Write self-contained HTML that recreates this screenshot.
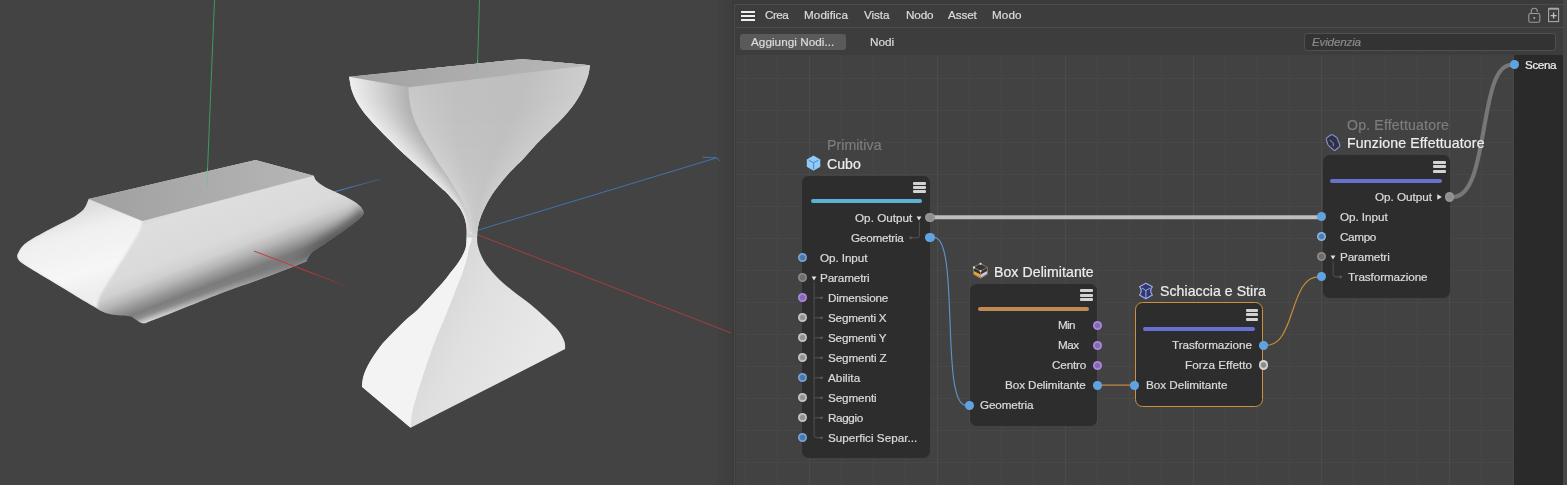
<!DOCTYPE html>
<html><head><meta charset="utf-8"><title>Node Editor</title><style>
html,body{margin:0;padding:0;background:#434343;}
body{width:1567px;height:485px;position:relative;overflow:hidden;font-family:"Liberation Sans",sans-serif;}
.t{position:absolute;white-space:nowrap;line-height:1;-webkit-text-stroke:0.22px currentColor;will-change:transform;}
.a{position:absolute;}
.node{position:absolute;background:#2d2d2d;border-radius:6.5px;box-sizing:border-box;}
.port{position:absolute;width:9.2px;height:9.2px;border-radius:50%;}
.bar{position:absolute;height:4.2px;border-radius:2.1px;}
.mi{position:absolute;width:12.4px;height:11.6px;}
.mi i{position:absolute;left:0;width:100%;height:3px;border-radius:1px;background:#d2d2d2;}
</style></head><body>
<div class="a" style="left:717px;top:0;width:16px;height:485px;background:linear-gradient(to right,#414141,#3e3e3e);"></div>
<svg class="a" style="left:0;top:0" width="736" height="485" viewBox="0 0 736 485">
<defs><filter id="b4" x="-20%" y="-20%" width="140%" height="140%"><feGaussianBlur stdDeviation="4"/></filter>
<filter id="b3" x="-20%" y="-20%" width="140%" height="140%"><feGaussianBlur stdDeviation="2.5"/></filter>
<filter id="b2" x="-20%" y="-20%" width="140%" height="140%"><feGaussianBlur stdDeviation="1.5"/></filter>
<filter id="b1" x="-20%" y="-20%" width="140%" height="140%"><feGaussianBlur stdDeviation="0.8"/></filter>
<linearGradient id="g1top" gradientUnits="userSpaceOnUse" x1="90" y1="200" x2="314" y2="176"><stop offset="0" stop-color="#a0a0a0"/><stop offset="1" stop-color="#b6b6b6"/></linearGradient>
<linearGradient id="g1front" gradientUnits="userSpaceOnUse" x1="190" y1="198.7" x2="226" y2="292"><stop offset="0" stop-color="#d6d6d6"/><stop offset="0.1" stop-color="#dedede"/><stop offset="0.5" stop-color="#dadada"/><stop offset="0.62" stop-color="#d0d0d0"/><stop offset="0.72" stop-color="#b6b6b6"/><stop offset="0.80" stop-color="#989898"/><stop offset="0.88" stop-color="#7e7e7e"/><stop offset="0.93" stop-color="#8e8e8e"/><stop offset="0.97" stop-color="#bcbcbc"/><stop offset="1" stop-color="#dadada"/></linearGradient>
<linearGradient id="g1lite" gradientUnits="userSpaceOnUse" x1="100" y1="0" x2="365" y2="0"><stop offset="0" stop-color="#fff" stop-opacity="0.16"/><stop offset="0.6" stop-color="#fff" stop-opacity="0"/></linearGradient>
<linearGradient id="g1left" gradientUnits="userSpaceOnUse" x1="60" y1="215" x2="85" y2="300"><stop offset="0" stop-color="#dedede"/><stop offset="0.25" stop-color="#f0f0f0"/><stop offset="0.7" stop-color="#f6f6f6"/><stop offset="1" stop-color="#ededed"/></linearGradient>
<linearGradient id="gblue1" gradientUnits="userSpaceOnUse" x1="335" y1="0" x2="380" y2="0"><stop offset="0" stop-color="#4a8ed2"/><stop offset="1" stop-color="#3a6ea6" stop-opacity="0.5"/></linearGradient>
<linearGradient id="gred1" gradientUnits="userSpaceOnUse" x1="254" y1="0" x2="347" y2="0"><stop offset="0" stop-color="#c83a3a"/><stop offset="0.6" stop-color="#c03838"/><stop offset="1" stop-color="#a03434" stop-opacity="0.25"/></linearGradient>
<linearGradient id="gband" gradientUnits="userSpaceOnUse" x1="150" y1="0" x2="320" y2="0"><stop offset="0" stop-color="#565656" stop-opacity="0"/><stop offset="1" stop-color="#565656" stop-opacity="1"/></linearGradient>
<linearGradient id="g2top" gradientUnits="userSpaceOnUse" x1="350" y1="77" x2="590" y2="65"><stop offset="0" stop-color="#a2a2a2"/><stop offset="1" stop-color="#b8b8b8"/></linearGradient>
<linearGradient id="g2lf" gradientUnits="userSpaceOnUse" x1="430" y1="300" x2="540" y2="350"><stop offset="0" stop-color="#d6d6d6"/><stop offset="0.4" stop-color="#e0e0e0"/><stop offset="1" stop-color="#e8e8e8"/></linearGradient><linearGradient id="f0"><stop offset="0" stop-color="#c8c8c8"/><stop offset="0.28" stop-color="#c0c0c0"/><stop offset="0.65" stop-color="#bfbfbf"/><stop offset="1" stop-color="#cecece"/></linearGradient><linearGradient id="l0"><stop offset="0" stop-color="#f0f0f0"/><stop offset="0.45" stop-color="#d4d4d4"/><stop offset="1" stop-color="#b0b0b0"/></linearGradient><linearGradient id="f1"><stop offset="0" stop-color="#c8c8c8"/><stop offset="0.28" stop-color="#c0c0c0"/><stop offset="0.65" stop-color="#bfbfbf"/><stop offset="1" stop-color="#cecece"/></linearGradient><linearGradient id="l1"><stop offset="0" stop-color="#f0f0f0"/><stop offset="0.45" stop-color="#d4d4d4"/><stop offset="1" stop-color="#b0b0b0"/></linearGradient><linearGradient id="f2"><stop offset="0" stop-color="#c8c8c8"/><stop offset="0.28" stop-color="#c0c0c0"/><stop offset="0.65" stop-color="#bfbfbf"/><stop offset="1" stop-color="#cecece"/></linearGradient><linearGradient id="l2"><stop offset="0" stop-color="#f0f0f0"/><stop offset="0.45" stop-color="#d4d4d4"/><stop offset="1" stop-color="#b0b0b0"/></linearGradient><linearGradient id="f3"><stop offset="0" stop-color="#c8c8c8"/><stop offset="0.28" stop-color="#c0c0c0"/><stop offset="0.65" stop-color="#bfbfbf"/><stop offset="1" stop-color="#cecece"/></linearGradient><linearGradient id="l3"><stop offset="0" stop-color="#f0f0f0"/><stop offset="0.45" stop-color="#d4d4d4"/><stop offset="1" stop-color="#b0b0b0"/></linearGradient><linearGradient id="f4"><stop offset="0" stop-color="#c8c8c8"/><stop offset="0.28" stop-color="#c0c0c0"/><stop offset="0.65" stop-color="#bfbfbf"/><stop offset="1" stop-color="#cecece"/></linearGradient><linearGradient id="l4"><stop offset="0" stop-color="#f0f0f0"/><stop offset="0.45" stop-color="#d4d4d4"/><stop offset="1" stop-color="#b0b0b0"/></linearGradient><linearGradient id="f5"><stop offset="0" stop-color="#c8c8c8"/><stop offset="0.28" stop-color="#c0c0c0"/><stop offset="0.65" stop-color="#bfbfbf"/><stop offset="1" stop-color="#cecece"/></linearGradient><linearGradient id="l5"><stop offset="0" stop-color="#f0f0f0"/><stop offset="0.45" stop-color="#d4d4d4"/><stop offset="1" stop-color="#b0b0b0"/></linearGradient><linearGradient id="f6"><stop offset="0" stop-color="#c8c8c8"/><stop offset="0.28" stop-color="#c0c0c0"/><stop offset="0.65" stop-color="#bfbfbf"/><stop offset="1" stop-color="#cecece"/></linearGradient><linearGradient id="l6"><stop offset="0" stop-color="#f0f0f0"/><stop offset="0.45" stop-color="#d4d4d4"/><stop offset="1" stop-color="#b0b0b0"/></linearGradient><linearGradient id="f7"><stop offset="0" stop-color="#c8c8c8"/><stop offset="0.28" stop-color="#c0c0c0"/><stop offset="0.65" stop-color="#bfbfbf"/><stop offset="1" stop-color="#cecece"/></linearGradient><linearGradient id="l7"><stop offset="0" stop-color="#f0f0f0"/><stop offset="0.45" stop-color="#d4d4d4"/><stop offset="1" stop-color="#b0b0b0"/></linearGradient><linearGradient id="f8"><stop offset="0" stop-color="#c8c8c8"/><stop offset="0.28" stop-color="#c0c0c0"/><stop offset="0.65" stop-color="#bfbfbf"/><stop offset="1" stop-color="#cecece"/></linearGradient><linearGradient id="l8"><stop offset="0" stop-color="#f0f0f0"/><stop offset="0.45" stop-color="#d4d4d4"/><stop offset="1" stop-color="#b0b0b0"/></linearGradient><linearGradient id="f9"><stop offset="0" stop-color="#c8c8c8"/><stop offset="0.28" stop-color="#c0c0c0"/><stop offset="0.65" stop-color="#bfbfbf"/><stop offset="1" stop-color="#cecece"/></linearGradient><linearGradient id="l9"><stop offset="0" stop-color="#f0f0f0"/><stop offset="0.45" stop-color="#d4d4d4"/><stop offset="1" stop-color="#b0b0b0"/></linearGradient><linearGradient id="f10"><stop offset="0" stop-color="#c8c8c8"/><stop offset="0.28" stop-color="#c0c0c0"/><stop offset="0.65" stop-color="#bfbfbf"/><stop offset="1" stop-color="#cecece"/></linearGradient><linearGradient id="l10"><stop offset="0" stop-color="#f0f0f0"/><stop offset="0.45" stop-color="#d4d4d4"/><stop offset="1" stop-color="#b0b0b0"/></linearGradient><linearGradient id="f11"><stop offset="0" stop-color="#c8c8c8"/><stop offset="0.28" stop-color="#c0c0c0"/><stop offset="0.65" stop-color="#bfbfbf"/><stop offset="1" stop-color="#cecece"/></linearGradient><linearGradient id="l11"><stop offset="0" stop-color="#f0f0f0"/><stop offset="0.45" stop-color="#d4d4d4"/><stop offset="1" stop-color="#b0b0b0"/></linearGradient><linearGradient id="f12"><stop offset="0" stop-color="#c8c8c8"/><stop offset="0.28" stop-color="#c0c0c0"/><stop offset="0.65" stop-color="#bfbfbf"/><stop offset="1" stop-color="#cecece"/></linearGradient><linearGradient id="l12"><stop offset="0" stop-color="#f0f0f0"/><stop offset="0.45" stop-color="#d4d4d4"/><stop offset="1" stop-color="#b0b0b0"/></linearGradient><linearGradient id="f13"><stop offset="0" stop-color="#c8c8c8"/><stop offset="0.28" stop-color="#c0c0c0"/><stop offset="0.65" stop-color="#bfbfbf"/><stop offset="1" stop-color="#cecece"/></linearGradient><linearGradient id="l13"><stop offset="0" stop-color="#f0f0f0"/><stop offset="0.45" stop-color="#d4d4d4"/><stop offset="1" stop-color="#b0b0b0"/></linearGradient><linearGradient id="f14"><stop offset="0" stop-color="#c8c8c8"/><stop offset="0.28" stop-color="#c0c0c0"/><stop offset="0.65" stop-color="#bfbfbf"/><stop offset="1" stop-color="#cecece"/></linearGradient><linearGradient id="l14"><stop offset="0" stop-color="#f0f0f0"/><stop offset="0.45" stop-color="#d4d4d4"/><stop offset="1" stop-color="#b0b0b0"/></linearGradient><linearGradient id="f15"><stop offset="0" stop-color="#c8c8c8"/><stop offset="0.28" stop-color="#c0c0c0"/><stop offset="0.65" stop-color="#bfbfbf"/><stop offset="1" stop-color="#cecece"/></linearGradient><linearGradient id="l15"><stop offset="0" stop-color="#f0f0f0"/><stop offset="0.45" stop-color="#d4d4d4"/><stop offset="1" stop-color="#b0b0b0"/></linearGradient><linearGradient id="f16"><stop offset="0" stop-color="#c8c8c8"/><stop offset="0.28" stop-color="#c0c0c0"/><stop offset="0.65" stop-color="#bfbfbf"/><stop offset="1" stop-color="#cecece"/></linearGradient><linearGradient id="l16"><stop offset="0" stop-color="#f0f0f0"/><stop offset="0.45" stop-color="#d4d4d4"/><stop offset="1" stop-color="#b0b0b0"/></linearGradient><linearGradient id="f17"><stop offset="0" stop-color="#c8c8c8"/><stop offset="0.28" stop-color="#c0c0c0"/><stop offset="0.65" stop-color="#bfbfbf"/><stop offset="1" stop-color="#cecece"/></linearGradient><linearGradient id="l17"><stop offset="0" stop-color="#f0f0f0"/><stop offset="0.45" stop-color="#d4d4d4"/><stop offset="1" stop-color="#b0b0b0"/></linearGradient><linearGradient id="f18"><stop offset="0" stop-color="#c8c8c8"/><stop offset="0.28" stop-color="#c0c0c0"/><stop offset="0.65" stop-color="#bfbfbf"/><stop offset="1" stop-color="#cecece"/></linearGradient><linearGradient id="l18"><stop offset="0" stop-color="#f0f0f0"/><stop offset="0.45" stop-color="#d4d4d4"/><stop offset="1" stop-color="#b0b0b0"/></linearGradient><linearGradient id="f19"><stop offset="0" stop-color="#c8c8c8"/><stop offset="0.28" stop-color="#c0c0c0"/><stop offset="0.65" stop-color="#bfbfbf"/><stop offset="1" stop-color="#cecece"/></linearGradient><linearGradient id="l19"><stop offset="0" stop-color="#f0f0f0"/><stop offset="0.45" stop-color="#d4d4d4"/><stop offset="1" stop-color="#b0b0b0"/></linearGradient><linearGradient id="f20"><stop offset="0" stop-color="#c9c9c9"/><stop offset="0.28" stop-color="#c0c0c0"/><stop offset="0.65" stop-color="#bfbfbf"/><stop offset="1" stop-color="#cecece"/></linearGradient><linearGradient id="l20"><stop offset="0" stop-color="#f0f0f0"/><stop offset="0.45" stop-color="#d4d4d4"/><stop offset="1" stop-color="#b0b0b0"/></linearGradient><linearGradient id="f21"><stop offset="0" stop-color="#c9c9c9"/><stop offset="0.28" stop-color="#c0c0c0"/><stop offset="0.65" stop-color="#bfbfbf"/><stop offset="1" stop-color="#cecece"/></linearGradient><linearGradient id="l21"><stop offset="0" stop-color="#f0f0f0"/><stop offset="0.45" stop-color="#d4d4d4"/><stop offset="1" stop-color="#b0b0b0"/></linearGradient><linearGradient id="f22"><stop offset="0" stop-color="#c9c9c9"/><stop offset="0.28" stop-color="#c0c0c0"/><stop offset="0.65" stop-color="#bfbfbf"/><stop offset="1" stop-color="#cecece"/></linearGradient><linearGradient id="l22"><stop offset="0" stop-color="#f0f0f0"/><stop offset="0.45" stop-color="#d4d4d4"/><stop offset="1" stop-color="#b0b0b0"/></linearGradient><linearGradient id="f23"><stop offset="0" stop-color="#c9c9c9"/><stop offset="0.28" stop-color="#c0c0c0"/><stop offset="0.65" stop-color="#bfbfbf"/><stop offset="1" stop-color="#cecece"/></linearGradient><linearGradient id="l23"><stop offset="0" stop-color="#efefef"/><stop offset="0.45" stop-color="#d4d4d4"/><stop offset="1" stop-color="#b0b0b0"/></linearGradient><linearGradient id="f24"><stop offset="0" stop-color="#cacaca"/><stop offset="0.28" stop-color="#c0c0c0"/><stop offset="0.65" stop-color="#bfbfbf"/><stop offset="1" stop-color="#cecece"/></linearGradient><linearGradient id="l24"><stop offset="0" stop-color="#efefef"/><stop offset="0.45" stop-color="#d4d4d4"/><stop offset="1" stop-color="#b0b0b0"/></linearGradient><linearGradient id="f25"><stop offset="0" stop-color="#cacaca"/><stop offset="0.28" stop-color="#c0c0c0"/><stop offset="0.65" stop-color="#bfbfbf"/><stop offset="1" stop-color="#cecece"/></linearGradient><linearGradient id="l25"><stop offset="0" stop-color="#efefef"/><stop offset="0.45" stop-color="#d4d4d4"/><stop offset="1" stop-color="#b0b0b0"/></linearGradient><linearGradient id="f26"><stop offset="0" stop-color="#cacaca"/><stop offset="0.28" stop-color="#c0c0c0"/><stop offset="0.65" stop-color="#bfbfbf"/><stop offset="1" stop-color="#cecece"/></linearGradient><linearGradient id="l26"><stop offset="0" stop-color="#efefef"/><stop offset="0.45" stop-color="#d4d4d4"/><stop offset="1" stop-color="#b0b0b0"/></linearGradient><linearGradient id="f27"><stop offset="0" stop-color="#cacaca"/><stop offset="0.28" stop-color="#c0c0c0"/><stop offset="0.65" stop-color="#bfbfbf"/><stop offset="1" stop-color="#cecece"/></linearGradient><linearGradient id="l27"><stop offset="0" stop-color="#efefef"/><stop offset="0.45" stop-color="#d4d4d4"/><stop offset="1" stop-color="#b0b0b0"/></linearGradient><linearGradient id="f28"><stop offset="0" stop-color="#cacaca"/><stop offset="0.28" stop-color="#c0c0c0"/><stop offset="0.65" stop-color="#bfbfbf"/><stop offset="1" stop-color="#cecece"/></linearGradient><linearGradient id="l28"><stop offset="0" stop-color="#efefef"/><stop offset="0.45" stop-color="#d4d4d4"/><stop offset="1" stop-color="#b0b0b0"/></linearGradient><linearGradient id="f29"><stop offset="0" stop-color="#cbcbcb"/><stop offset="0.28" stop-color="#c0c0c0"/><stop offset="0.65" stop-color="#bfbfbf"/><stop offset="1" stop-color="#cecece"/></linearGradient><linearGradient id="l29"><stop offset="0" stop-color="#efefef"/><stop offset="0.45" stop-color="#d4d4d4"/><stop offset="1" stop-color="#b0b0b0"/></linearGradient><linearGradient id="f30"><stop offset="0" stop-color="#cbcbcb"/><stop offset="0.28" stop-color="#c1c1c1"/><stop offset="0.65" stop-color="#bfbfbf"/><stop offset="1" stop-color="#cecece"/></linearGradient><linearGradient id="l30"><stop offset="0" stop-color="#efefef"/><stop offset="0.45" stop-color="#d4d4d4"/><stop offset="1" stop-color="#b0b0b0"/></linearGradient><linearGradient id="f31"><stop offset="0" stop-color="#cbcbcb"/><stop offset="0.28" stop-color="#c1c1c1"/><stop offset="0.65" stop-color="#bfbfbf"/><stop offset="1" stop-color="#cecece"/></linearGradient><linearGradient id="l31"><stop offset="0" stop-color="#efefef"/><stop offset="0.45" stop-color="#d4d4d4"/><stop offset="1" stop-color="#b0b0b0"/></linearGradient><linearGradient id="f32"><stop offset="0" stop-color="#cbcbcb"/><stop offset="0.28" stop-color="#c1c1c1"/><stop offset="0.65" stop-color="#bfbfbf"/><stop offset="1" stop-color="#cecece"/></linearGradient><linearGradient id="l32"><stop offset="0" stop-color="#eeeeee"/><stop offset="0.45" stop-color="#d4d4d4"/><stop offset="1" stop-color="#b0b0b0"/></linearGradient><linearGradient id="f33"><stop offset="0" stop-color="#cbcbcb"/><stop offset="0.28" stop-color="#c1c1c1"/><stop offset="0.65" stop-color="#bfbfbf"/><stop offset="1" stop-color="#cecece"/></linearGradient><linearGradient id="l33"><stop offset="0" stop-color="#eeeeee"/><stop offset="0.45" stop-color="#d5d5d5"/><stop offset="1" stop-color="#b0b0b0"/></linearGradient><linearGradient id="f34"><stop offset="0" stop-color="#cbcbcb"/><stop offset="0.28" stop-color="#c1c1c1"/><stop offset="0.65" stop-color="#bfbfbf"/><stop offset="1" stop-color="#cecece"/></linearGradient><linearGradient id="l34"><stop offset="0" stop-color="#eeeeee"/><stop offset="0.45" stop-color="#d5d5d5"/><stop offset="1" stop-color="#b0b0b0"/></linearGradient><linearGradient id="f35"><stop offset="0" stop-color="#cccccc"/><stop offset="0.28" stop-color="#c1c1c1"/><stop offset="0.65" stop-color="#bfbfbf"/><stop offset="1" stop-color="#cecece"/></linearGradient><linearGradient id="l35"><stop offset="0" stop-color="#eeeeee"/><stop offset="0.45" stop-color="#d5d5d5"/><stop offset="1" stop-color="#b0b0b0"/></linearGradient><linearGradient id="f36"><stop offset="0" stop-color="#cccccc"/><stop offset="0.28" stop-color="#c1c1c1"/><stop offset="0.65" stop-color="#bfbfbf"/><stop offset="1" stop-color="#cecece"/></linearGradient><linearGradient id="l36"><stop offset="0" stop-color="#eeeeee"/><stop offset="0.45" stop-color="#d5d5d5"/><stop offset="1" stop-color="#b0b0b0"/></linearGradient><linearGradient id="f37"><stop offset="0" stop-color="#cccccc"/><stop offset="0.28" stop-color="#c1c1c1"/><stop offset="0.65" stop-color="#bfbfbf"/><stop offset="1" stop-color="#cecece"/></linearGradient><linearGradient id="l37"><stop offset="0" stop-color="#eeeeee"/><stop offset="0.45" stop-color="#d5d5d5"/><stop offset="1" stop-color="#b1b1b1"/></linearGradient><linearGradient id="f38"><stop offset="0" stop-color="#cccccc"/><stop offset="0.28" stop-color="#c1c1c1"/><stop offset="0.65" stop-color="#bfbfbf"/><stop offset="1" stop-color="#cecece"/></linearGradient><linearGradient id="l38"><stop offset="0" stop-color="#eeeeee"/><stop offset="0.45" stop-color="#d5d5d5"/><stop offset="1" stop-color="#b1b1b1"/></linearGradient><linearGradient id="f39"><stop offset="0" stop-color="#cccccc"/><stop offset="0.28" stop-color="#c1c1c1"/><stop offset="0.65" stop-color="#bfbfbf"/><stop offset="1" stop-color="#cecece"/></linearGradient><linearGradient id="l39"><stop offset="0" stop-color="#eeeeee"/><stop offset="0.45" stop-color="#d5d5d5"/><stop offset="1" stop-color="#b1b1b1"/></linearGradient><linearGradient id="f40"><stop offset="0" stop-color="#cccccc"/><stop offset="0.28" stop-color="#c1c1c1"/><stop offset="0.65" stop-color="#bfbfbf"/><stop offset="1" stop-color="#cecece"/></linearGradient><linearGradient id="l40"><stop offset="0" stop-color="#eeeeee"/><stop offset="0.45" stop-color="#d5d5d5"/><stop offset="1" stop-color="#b1b1b1"/></linearGradient><linearGradient id="f41"><stop offset="0" stop-color="#cdcdcd"/><stop offset="0.28" stop-color="#c1c1c1"/><stop offset="0.65" stop-color="#bfbfbf"/><stop offset="1" stop-color="#cecece"/></linearGradient><linearGradient id="l41"><stop offset="0" stop-color="#eeeeee"/><stop offset="0.45" stop-color="#d5d5d5"/><stop offset="1" stop-color="#b1b1b1"/></linearGradient><linearGradient id="f42"><stop offset="0" stop-color="#cdcdcd"/><stop offset="0.28" stop-color="#c2c2c2"/><stop offset="0.65" stop-color="#c0c0c0"/><stop offset="1" stop-color="#cdcdcd"/></linearGradient><linearGradient id="l42"><stop offset="0" stop-color="#ededed"/><stop offset="0.45" stop-color="#d5d5d5"/><stop offset="1" stop-color="#b1b1b1"/></linearGradient><linearGradient id="f43"><stop offset="0" stop-color="#cdcdcd"/><stop offset="0.28" stop-color="#c2c2c2"/><stop offset="0.65" stop-color="#c0c0c0"/><stop offset="1" stop-color="#cdcdcd"/></linearGradient><linearGradient id="l43"><stop offset="0" stop-color="#ededed"/><stop offset="0.45" stop-color="#d5d5d5"/><stop offset="1" stop-color="#b1b1b1"/></linearGradient><linearGradient id="f44"><stop offset="0" stop-color="#cdcdcd"/><stop offset="0.28" stop-color="#c2c2c2"/><stop offset="0.65" stop-color="#c0c0c0"/><stop offset="1" stop-color="#cdcdcd"/></linearGradient><linearGradient id="l44"><stop offset="0" stop-color="#ededed"/><stop offset="0.45" stop-color="#d5d5d5"/><stop offset="1" stop-color="#b1b1b1"/></linearGradient><linearGradient id="f45"><stop offset="0" stop-color="#cdcdcd"/><stop offset="0.28" stop-color="#c2c2c2"/><stop offset="0.65" stop-color="#c0c0c0"/><stop offset="1" stop-color="#cdcdcd"/></linearGradient><linearGradient id="l45"><stop offset="0" stop-color="#ededed"/><stop offset="0.45" stop-color="#d5d5d5"/><stop offset="1" stop-color="#b1b1b1"/></linearGradient><linearGradient id="f46"><stop offset="0" stop-color="#cdcdcd"/><stop offset="0.28" stop-color="#c2c2c2"/><stop offset="0.65" stop-color="#c0c0c0"/><stop offset="1" stop-color="#cdcdcd"/></linearGradient><linearGradient id="l46"><stop offset="0" stop-color="#ededed"/><stop offset="0.45" stop-color="#d5d5d5"/><stop offset="1" stop-color="#b1b1b1"/></linearGradient><linearGradient id="f47"><stop offset="0" stop-color="#cdcdcd"/><stop offset="0.28" stop-color="#c2c2c2"/><stop offset="0.65" stop-color="#c0c0c0"/><stop offset="1" stop-color="#cdcdcd"/></linearGradient><linearGradient id="l47"><stop offset="0" stop-color="#ededed"/><stop offset="0.45" stop-color="#d5d5d5"/><stop offset="1" stop-color="#b1b1b1"/></linearGradient><linearGradient id="f48"><stop offset="0" stop-color="#cecece"/><stop offset="0.28" stop-color="#c2c2c2"/><stop offset="0.65" stop-color="#c0c0c0"/><stop offset="1" stop-color="#cdcdcd"/></linearGradient><linearGradient id="l48"><stop offset="0" stop-color="#ededed"/><stop offset="0.45" stop-color="#d5d5d5"/><stop offset="1" stop-color="#b2b2b2"/></linearGradient><linearGradient id="f49"><stop offset="0" stop-color="#cecece"/><stop offset="0.28" stop-color="#c2c2c2"/><stop offset="0.65" stop-color="#c0c0c0"/><stop offset="1" stop-color="#cdcdcd"/></linearGradient><linearGradient id="l49"><stop offset="0" stop-color="#ededed"/><stop offset="0.45" stop-color="#d5d5d5"/><stop offset="1" stop-color="#b2b2b2"/></linearGradient><linearGradient id="f50"><stop offset="0" stop-color="#cecece"/><stop offset="0.28" stop-color="#c2c2c2"/><stop offset="0.65" stop-color="#c0c0c0"/><stop offset="1" stop-color="#cdcdcd"/></linearGradient><linearGradient id="l50"><stop offset="0" stop-color="#ededed"/><stop offset="0.45" stop-color="#d6d6d6"/><stop offset="1" stop-color="#b2b2b2"/></linearGradient><linearGradient id="f51"><stop offset="0" stop-color="#cecece"/><stop offset="0.28" stop-color="#c3c3c3"/><stop offset="0.65" stop-color="#c0c0c0"/><stop offset="1" stop-color="#cdcdcd"/></linearGradient><linearGradient id="l51"><stop offset="0" stop-color="#ededed"/><stop offset="0.45" stop-color="#d6d6d6"/><stop offset="1" stop-color="#b2b2b2"/></linearGradient><linearGradient id="f52"><stop offset="0" stop-color="#cecece"/><stop offset="0.28" stop-color="#c3c3c3"/><stop offset="0.65" stop-color="#c0c0c0"/><stop offset="1" stop-color="#cdcdcd"/></linearGradient><linearGradient id="l52"><stop offset="0" stop-color="#ececec"/><stop offset="0.45" stop-color="#d6d6d6"/><stop offset="1" stop-color="#b2b2b2"/></linearGradient><linearGradient id="f53"><stop offset="0" stop-color="#cecece"/><stop offset="0.28" stop-color="#c3c3c3"/><stop offset="0.65" stop-color="#c0c0c0"/><stop offset="1" stop-color="#cdcdcd"/></linearGradient><linearGradient id="l53"><stop offset="0" stop-color="#ececec"/><stop offset="0.45" stop-color="#d6d6d6"/><stop offset="1" stop-color="#b2b2b2"/></linearGradient><linearGradient id="f54"><stop offset="0" stop-color="#cecece"/><stop offset="0.28" stop-color="#c3c3c3"/><stop offset="0.65" stop-color="#c0c0c0"/><stop offset="1" stop-color="#cdcdcd"/></linearGradient><linearGradient id="l54"><stop offset="0" stop-color="#ececec"/><stop offset="0.45" stop-color="#d6d6d6"/><stop offset="1" stop-color="#b2b2b2"/></linearGradient><linearGradient id="f55"><stop offset="0" stop-color="#cfcfcf"/><stop offset="0.28" stop-color="#c3c3c3"/><stop offset="0.65" stop-color="#c0c0c0"/><stop offset="1" stop-color="#cdcdcd"/></linearGradient><linearGradient id="l55"><stop offset="0" stop-color="#ececec"/><stop offset="0.45" stop-color="#d6d6d6"/><stop offset="1" stop-color="#b3b3b3"/></linearGradient><linearGradient id="f56"><stop offset="0" stop-color="#cfcfcf"/><stop offset="0.28" stop-color="#c3c3c3"/><stop offset="0.65" stop-color="#c0c0c0"/><stop offset="1" stop-color="#cdcdcd"/></linearGradient><linearGradient id="l56"><stop offset="0" stop-color="#ececec"/><stop offset="0.45" stop-color="#d6d6d6"/><stop offset="1" stop-color="#b3b3b3"/></linearGradient><linearGradient id="f57"><stop offset="0" stop-color="#cfcfcf"/><stop offset="0.28" stop-color="#c3c3c3"/><stop offset="0.65" stop-color="#c1c1c1"/><stop offset="1" stop-color="#cdcdcd"/></linearGradient><linearGradient id="l57"><stop offset="0" stop-color="#ececec"/><stop offset="0.45" stop-color="#d6d6d6"/><stop offset="1" stop-color="#b3b3b3"/></linearGradient><linearGradient id="f58"><stop offset="0" stop-color="#cfcfcf"/><stop offset="0.28" stop-color="#c3c3c3"/><stop offset="0.65" stop-color="#c1c1c1"/><stop offset="1" stop-color="#cdcdcd"/></linearGradient><linearGradient id="l58"><stop offset="0" stop-color="#ececec"/><stop offset="0.45" stop-color="#d6d6d6"/><stop offset="1" stop-color="#b3b3b3"/></linearGradient><linearGradient id="f59"><stop offset="0" stop-color="#cfcfcf"/><stop offset="0.28" stop-color="#c4c4c4"/><stop offset="0.65" stop-color="#c1c1c1"/><stop offset="1" stop-color="#cdcdcd"/></linearGradient><linearGradient id="l59"><stop offset="0" stop-color="#ececec"/><stop offset="0.45" stop-color="#d6d6d6"/><stop offset="1" stop-color="#b3b3b3"/></linearGradient><linearGradient id="f60"><stop offset="0" stop-color="#cfcfcf"/><stop offset="0.28" stop-color="#c4c4c4"/><stop offset="0.65" stop-color="#c1c1c1"/><stop offset="1" stop-color="#cdcdcd"/></linearGradient><linearGradient id="l60"><stop offset="0" stop-color="#ececec"/><stop offset="0.45" stop-color="#d6d6d6"/><stop offset="1" stop-color="#b4b4b4"/></linearGradient><linearGradient id="f61"><stop offset="0" stop-color="#cfcfcf"/><stop offset="0.28" stop-color="#c4c4c4"/><stop offset="0.65" stop-color="#c1c1c1"/><stop offset="1" stop-color="#cdcdcd"/></linearGradient><linearGradient id="l61"><stop offset="0" stop-color="#ececec"/><stop offset="0.45" stop-color="#d6d6d6"/><stop offset="1" stop-color="#b4b4b4"/></linearGradient><linearGradient id="f62"><stop offset="0" stop-color="#d0d0d0"/><stop offset="0.28" stop-color="#c4c4c4"/><stop offset="0.65" stop-color="#c1c1c1"/><stop offset="1" stop-color="#cdcdcd"/></linearGradient><linearGradient id="l62"><stop offset="0" stop-color="#ebebeb"/><stop offset="0.45" stop-color="#d6d6d6"/><stop offset="1" stop-color="#b4b4b4"/></linearGradient><linearGradient id="f63"><stop offset="0" stop-color="#d0d0d0"/><stop offset="0.28" stop-color="#c4c4c4"/><stop offset="0.65" stop-color="#c1c1c1"/><stop offset="1" stop-color="#cdcdcd"/></linearGradient><linearGradient id="l63"><stop offset="0" stop-color="#ebebeb"/><stop offset="0.45" stop-color="#d7d7d7"/><stop offset="1" stop-color="#b4b4b4"/></linearGradient><linearGradient id="f64"><stop offset="0" stop-color="#d0d0d0"/><stop offset="0.28" stop-color="#c4c4c4"/><stop offset="0.65" stop-color="#c1c1c1"/><stop offset="1" stop-color="#cdcdcd"/></linearGradient><linearGradient id="l64"><stop offset="0" stop-color="#ebebeb"/><stop offset="0.45" stop-color="#d7d7d7"/><stop offset="1" stop-color="#b4b4b4"/></linearGradient><linearGradient id="f65"><stop offset="0" stop-color="#d0d0d0"/><stop offset="0.28" stop-color="#c4c4c4"/><stop offset="0.65" stop-color="#c1c1c1"/><stop offset="1" stop-color="#cdcdcd"/></linearGradient><linearGradient id="l65"><stop offset="0" stop-color="#ebebeb"/><stop offset="0.45" stop-color="#d7d7d7"/><stop offset="1" stop-color="#b5b5b5"/></linearGradient><linearGradient id="f66"><stop offset="0" stop-color="#d0d0d0"/><stop offset="0.28" stop-color="#c5c5c5"/><stop offset="0.65" stop-color="#c1c1c1"/><stop offset="1" stop-color="#cdcdcd"/></linearGradient><linearGradient id="l66"><stop offset="0" stop-color="#ebebeb"/><stop offset="0.45" stop-color="#d7d7d7"/><stop offset="1" stop-color="#b5b5b5"/></linearGradient><linearGradient id="f67"><stop offset="0" stop-color="#d0d0d0"/><stop offset="0.28" stop-color="#c5c5c5"/><stop offset="0.65" stop-color="#c2c2c2"/><stop offset="1" stop-color="#cdcdcd"/></linearGradient><linearGradient id="l67"><stop offset="0" stop-color="#ebebeb"/><stop offset="0.45" stop-color="#d7d7d7"/><stop offset="1" stop-color="#b5b5b5"/></linearGradient><linearGradient id="f68"><stop offset="0" stop-color="#d0d0d0"/><stop offset="0.28" stop-color="#c5c5c5"/><stop offset="0.65" stop-color="#c2c2c2"/><stop offset="1" stop-color="#cdcdcd"/></linearGradient><linearGradient id="l68"><stop offset="0" stop-color="#ebebeb"/><stop offset="0.45" stop-color="#d7d7d7"/><stop offset="1" stop-color="#b6b6b6"/></linearGradient><linearGradient id="f69"><stop offset="0" stop-color="#d0d0d0"/><stop offset="0.28" stop-color="#c5c5c5"/><stop offset="0.65" stop-color="#c2c2c2"/><stop offset="1" stop-color="#cdcdcd"/></linearGradient><linearGradient id="l69"><stop offset="0" stop-color="#ebebeb"/><stop offset="0.45" stop-color="#d7d7d7"/><stop offset="1" stop-color="#b6b6b6"/></linearGradient><linearGradient id="f70"><stop offset="0" stop-color="#d1d1d1"/><stop offset="0.28" stop-color="#c5c5c5"/><stop offset="0.65" stop-color="#c2c2c2"/><stop offset="1" stop-color="#cdcdcd"/></linearGradient><linearGradient id="l70"><stop offset="0" stop-color="#ebebeb"/><stop offset="0.45" stop-color="#d7d7d7"/><stop offset="1" stop-color="#b6b6b6"/></linearGradient><linearGradient id="f71"><stop offset="0" stop-color="#d1d1d1"/><stop offset="0.28" stop-color="#c5c5c5"/><stop offset="0.65" stop-color="#c2c2c2"/><stop offset="1" stop-color="#cdcdcd"/></linearGradient><linearGradient id="l71"><stop offset="0" stop-color="#eaeaea"/><stop offset="0.45" stop-color="#d7d7d7"/><stop offset="1" stop-color="#b6b6b6"/></linearGradient><linearGradient id="f72"><stop offset="0" stop-color="#d1d1d1"/><stop offset="0.28" stop-color="#c6c6c6"/><stop offset="0.65" stop-color="#c2c2c2"/><stop offset="1" stop-color="#cdcdcd"/></linearGradient><linearGradient id="l72"><stop offset="0" stop-color="#eaeaea"/><stop offset="0.45" stop-color="#d7d7d7"/><stop offset="1" stop-color="#b7b7b7"/></linearGradient><linearGradient id="f73"><stop offset="0" stop-color="#d1d1d1"/><stop offset="0.28" stop-color="#c6c6c6"/><stop offset="0.65" stop-color="#c2c2c2"/><stop offset="1" stop-color="#cdcdcd"/></linearGradient><linearGradient id="l73"><stop offset="0" stop-color="#eaeaea"/><stop offset="0.45" stop-color="#d7d7d7"/><stop offset="1" stop-color="#b7b7b7"/></linearGradient><linearGradient id="f74"><stop offset="0" stop-color="#d1d1d1"/><stop offset="0.28" stop-color="#c6c6c6"/><stop offset="0.65" stop-color="#c2c2c2"/><stop offset="1" stop-color="#cdcdcd"/></linearGradient><linearGradient id="l74"><stop offset="0" stop-color="#eaeaea"/><stop offset="0.45" stop-color="#d8d8d8"/><stop offset="1" stop-color="#b7b7b7"/></linearGradient><linearGradient id="f75"><stop offset="0" stop-color="#d1d1d1"/><stop offset="0.28" stop-color="#c6c6c6"/><stop offset="0.65" stop-color="#c3c3c3"/><stop offset="1" stop-color="#cdcdcd"/></linearGradient><linearGradient id="l75"><stop offset="0" stop-color="#eaeaea"/><stop offset="0.45" stop-color="#d8d8d8"/><stop offset="1" stop-color="#b8b8b8"/></linearGradient><linearGradient id="f76"><stop offset="0" stop-color="#d1d1d1"/><stop offset="0.28" stop-color="#c6c6c6"/><stop offset="0.65" stop-color="#c3c3c3"/><stop offset="1" stop-color="#cdcdcd"/></linearGradient><linearGradient id="l76"><stop offset="0" stop-color="#eaeaea"/><stop offset="0.45" stop-color="#d8d8d8"/><stop offset="1" stop-color="#b8b8b8"/></linearGradient><linearGradient id="f77"><stop offset="0" stop-color="#d1d1d1"/><stop offset="0.28" stop-color="#c6c6c6"/><stop offset="0.65" stop-color="#c3c3c3"/><stop offset="1" stop-color="#cdcdcd"/></linearGradient><linearGradient id="l77"><stop offset="0" stop-color="#eaeaea"/><stop offset="0.45" stop-color="#d8d8d8"/><stop offset="1" stop-color="#b8b8b8"/></linearGradient><linearGradient id="f78"><stop offset="0" stop-color="#d2d2d2"/><stop offset="0.28" stop-color="#c7c7c7"/><stop offset="0.65" stop-color="#c3c3c3"/><stop offset="1" stop-color="#cdcdcd"/></linearGradient><linearGradient id="l78"><stop offset="0" stop-color="#eaeaea"/><stop offset="0.45" stop-color="#d8d8d8"/><stop offset="1" stop-color="#b9b9b9"/></linearGradient><linearGradient id="f79"><stop offset="0" stop-color="#d2d2d2"/><stop offset="0.28" stop-color="#c7c7c7"/><stop offset="0.65" stop-color="#c3c3c3"/><stop offset="1" stop-color="#cdcdcd"/></linearGradient><linearGradient id="l79"><stop offset="0" stop-color="#eaeaea"/><stop offset="0.45" stop-color="#d8d8d8"/><stop offset="1" stop-color="#b9b9b9"/></linearGradient><linearGradient id="f80"><stop offset="0" stop-color="#d2d2d2"/><stop offset="0.28" stop-color="#c7c7c7"/><stop offset="0.65" stop-color="#c3c3c3"/><stop offset="1" stop-color="#cdcdcd"/></linearGradient><linearGradient id="l80"><stop offset="0" stop-color="#eaeaea"/><stop offset="0.45" stop-color="#d8d8d8"/><stop offset="1" stop-color="#b9b9b9"/></linearGradient><linearGradient id="f81"><stop offset="0" stop-color="#d2d2d2"/><stop offset="0.28" stop-color="#c7c7c7"/><stop offset="0.65" stop-color="#c3c3c3"/><stop offset="1" stop-color="#cdcdcd"/></linearGradient><linearGradient id="l81"><stop offset="0" stop-color="#e9e9e9"/><stop offset="0.45" stop-color="#d8d8d8"/><stop offset="1" stop-color="#bababa"/></linearGradient><linearGradient id="f82"><stop offset="0" stop-color="#d2d2d2"/><stop offset="0.28" stop-color="#c7c7c7"/><stop offset="0.65" stop-color="#c4c4c4"/><stop offset="1" stop-color="#cdcdcd"/></linearGradient><linearGradient id="l82"><stop offset="0" stop-color="#e9e9e9"/><stop offset="0.45" stop-color="#d8d8d8"/><stop offset="1" stop-color="#bababa"/></linearGradient><linearGradient id="f83"><stop offset="0" stop-color="#d2d2d2"/><stop offset="0.28" stop-color="#c8c8c8"/><stop offset="0.65" stop-color="#c4c4c4"/><stop offset="1" stop-color="#cdcdcd"/></linearGradient><linearGradient id="l83"><stop offset="0" stop-color="#e9e9e9"/><stop offset="0.45" stop-color="#d8d8d8"/><stop offset="1" stop-color="#bbbbbb"/></linearGradient><linearGradient id="f84"><stop offset="0" stop-color="#d2d2d2"/><stop offset="0.28" stop-color="#c8c8c8"/><stop offset="0.65" stop-color="#c4c4c4"/><stop offset="1" stop-color="#cdcdcd"/></linearGradient><linearGradient id="l84"><stop offset="0" stop-color="#e9e9e9"/><stop offset="0.45" stop-color="#d9d9d9"/><stop offset="1" stop-color="#bbbbbb"/></linearGradient><linearGradient id="f85"><stop offset="0" stop-color="#d3d3d3"/><stop offset="0.28" stop-color="#c8c8c8"/><stop offset="0.65" stop-color="#c4c4c4"/><stop offset="1" stop-color="#cdcdcd"/></linearGradient><linearGradient id="l85"><stop offset="0" stop-color="#e9e9e9"/><stop offset="0.45" stop-color="#d9d9d9"/><stop offset="1" stop-color="#bbbbbb"/></linearGradient><linearGradient id="f86"><stop offset="0" stop-color="#d3d3d3"/><stop offset="0.28" stop-color="#c8c8c8"/><stop offset="0.65" stop-color="#c4c4c4"/><stop offset="1" stop-color="#cdcdcd"/></linearGradient><linearGradient id="l86"><stop offset="0" stop-color="#e9e9e9"/><stop offset="0.45" stop-color="#d9d9d9"/><stop offset="1" stop-color="#bcbcbc"/></linearGradient><linearGradient id="f87"><stop offset="0" stop-color="#d3d3d3"/><stop offset="0.28" stop-color="#c8c8c8"/><stop offset="0.65" stop-color="#c4c4c4"/><stop offset="1" stop-color="#cdcdcd"/></linearGradient><linearGradient id="l87"><stop offset="0" stop-color="#e9e9e9"/><stop offset="0.45" stop-color="#d9d9d9"/><stop offset="1" stop-color="#bcbcbc"/></linearGradient><linearGradient id="f88"><stop offset="0" stop-color="#d3d3d3"/><stop offset="0.28" stop-color="#c8c8c8"/><stop offset="0.65" stop-color="#c4c4c4"/><stop offset="1" stop-color="#cdcdcd"/></linearGradient><linearGradient id="l88"><stop offset="0" stop-color="#e9e9e9"/><stop offset="0.45" stop-color="#d9d9d9"/><stop offset="1" stop-color="#bdbdbd"/></linearGradient><linearGradient id="f89"><stop offset="0" stop-color="#d3d3d3"/><stop offset="0.28" stop-color="#c9c9c9"/><stop offset="0.65" stop-color="#c5c5c5"/><stop offset="1" stop-color="#cdcdcd"/></linearGradient><linearGradient id="l89"><stop offset="0" stop-color="#e9e9e9"/><stop offset="0.45" stop-color="#d9d9d9"/><stop offset="1" stop-color="#bdbdbd"/></linearGradient><linearGradient id="f90"><stop offset="0" stop-color="#d3d3d3"/><stop offset="0.28" stop-color="#c9c9c9"/><stop offset="0.65" stop-color="#c5c5c5"/><stop offset="1" stop-color="#cccccc"/></linearGradient><linearGradient id="l90"><stop offset="0" stop-color="#e8e8e8"/><stop offset="0.45" stop-color="#d9d9d9"/><stop offset="1" stop-color="#bebebe"/></linearGradient><linearGradient id="f91"><stop offset="0" stop-color="#d3d3d3"/><stop offset="0.28" stop-color="#c9c9c9"/><stop offset="0.65" stop-color="#c5c5c5"/><stop offset="1" stop-color="#cccccc"/></linearGradient><linearGradient id="l91"><stop offset="0" stop-color="#e8e8e8"/><stop offset="0.45" stop-color="#d9d9d9"/><stop offset="1" stop-color="#bebebe"/></linearGradient><linearGradient id="f92"><stop offset="0" stop-color="#d3d3d3"/><stop offset="0.28" stop-color="#c9c9c9"/><stop offset="0.65" stop-color="#c5c5c5"/><stop offset="1" stop-color="#cccccc"/></linearGradient><linearGradient id="l92"><stop offset="0" stop-color="#e8e8e8"/><stop offset="0.45" stop-color="#d9d9d9"/><stop offset="1" stop-color="#bfbfbf"/></linearGradient><linearGradient id="f93"><stop offset="0" stop-color="#d3d3d3"/><stop offset="0.28" stop-color="#c9c9c9"/><stop offset="0.65" stop-color="#c5c5c5"/><stop offset="1" stop-color="#cccccc"/></linearGradient><linearGradient id="l93"><stop offset="0" stop-color="#e8e8e8"/><stop offset="0.45" stop-color="#dadada"/><stop offset="1" stop-color="#bfbfbf"/></linearGradient><linearGradient id="f94"><stop offset="0" stop-color="#d4d4d4"/><stop offset="0.28" stop-color="#cacaca"/><stop offset="0.65" stop-color="#c6c6c6"/><stop offset="1" stop-color="#cccccc"/></linearGradient><linearGradient id="l94"><stop offset="0" stop-color="#e8e8e8"/><stop offset="0.45" stop-color="#dadada"/><stop offset="1" stop-color="#c0c0c0"/></linearGradient><linearGradient id="f95"><stop offset="0" stop-color="#d4d4d4"/><stop offset="0.28" stop-color="#cacaca"/><stop offset="0.65" stop-color="#c6c6c6"/><stop offset="1" stop-color="#cccccc"/></linearGradient><linearGradient id="l95"><stop offset="0" stop-color="#e8e8e8"/><stop offset="0.45" stop-color="#dadada"/><stop offset="1" stop-color="#c0c0c0"/></linearGradient><linearGradient id="f96"><stop offset="0" stop-color="#d4d4d4"/><stop offset="0.28" stop-color="#cacaca"/><stop offset="0.65" stop-color="#c6c6c6"/><stop offset="1" stop-color="#cccccc"/></linearGradient><linearGradient id="l96"><stop offset="0" stop-color="#e8e8e8"/><stop offset="0.45" stop-color="#dadada"/><stop offset="1" stop-color="#c1c1c1"/></linearGradient><linearGradient id="f97"><stop offset="0" stop-color="#d4d4d4"/><stop offset="0.28" stop-color="#cacaca"/><stop offset="0.65" stop-color="#c6c6c6"/><stop offset="1" stop-color="#cccccc"/></linearGradient><linearGradient id="l97"><stop offset="0" stop-color="#e8e8e8"/><stop offset="0.45" stop-color="#dadada"/><stop offset="1" stop-color="#c1c1c1"/></linearGradient><linearGradient id="f98"><stop offset="0" stop-color="#d4d4d4"/><stop offset="0.28" stop-color="#cacaca"/><stop offset="0.65" stop-color="#c6c6c6"/><stop offset="1" stop-color="#cccccc"/></linearGradient><linearGradient id="l98"><stop offset="0" stop-color="#e8e8e8"/><stop offset="0.45" stop-color="#dadada"/><stop offset="1" stop-color="#c2c2c2"/></linearGradient><linearGradient id="f99"><stop offset="0" stop-color="#d4d4d4"/><stop offset="0.28" stop-color="#cbcbcb"/><stop offset="0.65" stop-color="#c7c7c7"/><stop offset="1" stop-color="#cccccc"/></linearGradient><linearGradient id="l99"><stop offset="0" stop-color="#e8e8e8"/><stop offset="0.45" stop-color="#dadada"/><stop offset="1" stop-color="#c2c2c2"/></linearGradient><linearGradient id="f100"><stop offset="0" stop-color="#d4d4d4"/><stop offset="0.28" stop-color="#cbcbcb"/><stop offset="0.65" stop-color="#c7c7c7"/><stop offset="1" stop-color="#cccccc"/></linearGradient><linearGradient id="l100"><stop offset="0" stop-color="#e7e7e7"/><stop offset="0.45" stop-color="#dadada"/><stop offset="1" stop-color="#c3c3c3"/></linearGradient><linearGradient id="f101"><stop offset="0" stop-color="#d4d4d4"/><stop offset="0.28" stop-color="#cbcbcb"/><stop offset="0.65" stop-color="#c7c7c7"/><stop offset="1" stop-color="#cccccc"/></linearGradient><linearGradient id="l101"><stop offset="0" stop-color="#e7e7e7"/><stop offset="0.45" stop-color="#dadada"/><stop offset="1" stop-color="#c3c3c3"/></linearGradient><linearGradient id="f102"><stop offset="0" stop-color="#d5d5d5"/><stop offset="0.28" stop-color="#cbcbcb"/><stop offset="0.65" stop-color="#c7c7c7"/><stop offset="1" stop-color="#cccccc"/></linearGradient><linearGradient id="l102"><stop offset="0" stop-color="#e7e7e7"/><stop offset="0.45" stop-color="#dbdbdb"/><stop offset="1" stop-color="#c4c4c4"/></linearGradient><linearGradient id="f103"><stop offset="0" stop-color="#d5d5d5"/><stop offset="0.28" stop-color="#cccccc"/><stop offset="0.65" stop-color="#c7c7c7"/><stop offset="1" stop-color="#cccccc"/></linearGradient><linearGradient id="l103"><stop offset="0" stop-color="#e7e7e7"/><stop offset="0.45" stop-color="#dbdbdb"/><stop offset="1" stop-color="#c5c5c5"/></linearGradient><linearGradient id="f104"><stop offset="0" stop-color="#d5d5d5"/><stop offset="0.28" stop-color="#cccccc"/><stop offset="0.65" stop-color="#c8c8c8"/><stop offset="1" stop-color="#cccccc"/></linearGradient><linearGradient id="l104"><stop offset="0" stop-color="#e7e7e7"/><stop offset="0.45" stop-color="#dbdbdb"/><stop offset="1" stop-color="#c5c5c5"/></linearGradient><linearGradient id="f105"><stop offset="0" stop-color="#d5d5d5"/><stop offset="0.28" stop-color="#cccccc"/><stop offset="0.65" stop-color="#c8c8c8"/><stop offset="1" stop-color="#cccccc"/></linearGradient><linearGradient id="l105"><stop offset="0" stop-color="#e7e7e7"/><stop offset="0.45" stop-color="#dbdbdb"/><stop offset="1" stop-color="#c6c6c6"/></linearGradient><linearGradient id="f106"><stop offset="0" stop-color="#d5d5d5"/><stop offset="0.28" stop-color="#cccccc"/><stop offset="0.65" stop-color="#c8c8c8"/><stop offset="1" stop-color="#cccccc"/></linearGradient><linearGradient id="l106"><stop offset="0" stop-color="#e7e7e7"/><stop offset="0.45" stop-color="#dbdbdb"/><stop offset="1" stop-color="#c6c6c6"/></linearGradient><linearGradient id="f107"><stop offset="0" stop-color="#d5d5d5"/><stop offset="0.28" stop-color="#cccccc"/><stop offset="0.65" stop-color="#c8c8c8"/><stop offset="1" stop-color="#cccccc"/></linearGradient><linearGradient id="l107"><stop offset="0" stop-color="#e7e7e7"/><stop offset="0.45" stop-color="#dbdbdb"/><stop offset="1" stop-color="#c7c7c7"/></linearGradient><linearGradient id="f108"><stop offset="0" stop-color="#d5d5d5"/><stop offset="0.28" stop-color="#cdcdcd"/><stop offset="0.65" stop-color="#c9c9c9"/><stop offset="1" stop-color="#cccccc"/></linearGradient><linearGradient id="l108"><stop offset="0" stop-color="#e7e7e7"/><stop offset="0.45" stop-color="#dbdbdb"/><stop offset="1" stop-color="#c8c8c8"/></linearGradient><linearGradient id="f109"><stop offset="0" stop-color="#d5d5d5"/><stop offset="0.28" stop-color="#cdcdcd"/><stop offset="0.65" stop-color="#c9c9c9"/><stop offset="1" stop-color="#cccccc"/></linearGradient><linearGradient id="l109"><stop offset="0" stop-color="#e7e7e7"/><stop offset="0.45" stop-color="#dbdbdb"/><stop offset="1" stop-color="#c8c8c8"/></linearGradient><linearGradient id="f110"><stop offset="0" stop-color="#d6d6d6"/><stop offset="0.28" stop-color="#cdcdcd"/><stop offset="0.65" stop-color="#c9c9c9"/><stop offset="1" stop-color="#cccccc"/></linearGradient><linearGradient id="l110"><stop offset="0" stop-color="#e6e6e6"/><stop offset="0.45" stop-color="#dbdbdb"/><stop offset="1" stop-color="#c9c9c9"/></linearGradient><linearGradient id="f111"><stop offset="0" stop-color="#d6d6d6"/><stop offset="0.28" stop-color="#cdcdcd"/><stop offset="0.65" stop-color="#c9c9c9"/><stop offset="1" stop-color="#cccccc"/></linearGradient><linearGradient id="l111"><stop offset="0" stop-color="#e6e6e6"/><stop offset="0.45" stop-color="#dcdcdc"/><stop offset="1" stop-color="#cacaca"/></linearGradient><linearGradient id="f112"><stop offset="0" stop-color="#d6d6d6"/><stop offset="0.28" stop-color="#cecece"/><stop offset="0.65" stop-color="#c9c9c9"/><stop offset="1" stop-color="#cccccc"/></linearGradient><linearGradient id="l112"><stop offset="0" stop-color="#e6e6e6"/><stop offset="0.45" stop-color="#dcdcdc"/><stop offset="1" stop-color="#cacaca"/></linearGradient><linearGradient id="f113"><stop offset="0" stop-color="#d6d6d6"/><stop offset="0.28" stop-color="#cecece"/><stop offset="0.65" stop-color="#cacaca"/><stop offset="1" stop-color="#cccccc"/></linearGradient><linearGradient id="l113"><stop offset="0" stop-color="#e6e6e6"/><stop offset="0.45" stop-color="#dcdcdc"/><stop offset="1" stop-color="#cbcbcb"/></linearGradient><linearGradient id="f114"><stop offset="0" stop-color="#d6d6d6"/><stop offset="0.28" stop-color="#cecece"/><stop offset="0.65" stop-color="#cacaca"/><stop offset="1" stop-color="#cccccc"/></linearGradient><linearGradient id="l114"><stop offset="0" stop-color="#e6e6e6"/><stop offset="0.45" stop-color="#dcdcdc"/><stop offset="1" stop-color="#cccccc"/></linearGradient><linearGradient id="f115"><stop offset="0" stop-color="#d6d6d6"/><stop offset="0.28" stop-color="#cecece"/><stop offset="0.65" stop-color="#cacaca"/><stop offset="1" stop-color="#cccccc"/></linearGradient><linearGradient id="l115"><stop offset="0" stop-color="#e6e6e6"/><stop offset="0.45" stop-color="#dcdcdc"/><stop offset="1" stop-color="#cccccc"/></linearGradient><linearGradient id="f116"><stop offset="0" stop-color="#d6d6d6"/><stop offset="0.28" stop-color="#cecece"/><stop offset="0.65" stop-color="#cacaca"/><stop offset="1" stop-color="#cccccc"/></linearGradient><linearGradient id="l116"><stop offset="0" stop-color="#e6e6e6"/><stop offset="0.45" stop-color="#dcdcdc"/><stop offset="1" stop-color="#cccccc"/></linearGradient><linearGradient id="f117"><stop offset="0" stop-color="#d6d6d6"/><stop offset="0.28" stop-color="#cecece"/><stop offset="0.65" stop-color="#cacaca"/><stop offset="1" stop-color="#cccccc"/></linearGradient><linearGradient id="l117"><stop offset="0" stop-color="#e6e6e6"/><stop offset="0.45" stop-color="#dcdcdc"/><stop offset="1" stop-color="#cccccc"/></linearGradient></defs>
<path d="M214.5 0L206.8 187" stroke="#3aa564" stroke-width="0.9" fill="none"/>
<path d="M479.5 0L477.3 71" stroke="#3aa564" stroke-width="0.9" fill="none"/>
<path d="M334 191.9L380 179.2" stroke="url(#gblue1)" stroke-width="1" fill="none"/>
<path d="M476.8 230.5L716.7 157.8M702.3 157.2L716.7 157.8L719.8 160.9" stroke="#4377b8" stroke-width="0.9" fill="none"/>
<path d="M474 233.4L731.2 333" stroke="#b23c3c" stroke-width="0.9" fill="none"/>
<clipPath id="c1"><path d="M88.7 199.1C87.8 200.8 86.6 206.1 83.6 209.4C80.6 212.7 76.5 215.3 70.6 218.7C64.7 222.1 55.7 225.9 48.3 229.9C40.9 233.9 30.9 239.2 26.0 242.9C21.1 246.6 20.0 249.7 18.6 252.2C17.2 254.7 16.9 255.8 17.5 257.7C18.1 259.6 19.0 260.8 22.3 263.3C25.6 265.8 31.5 269.2 37.1 272.6C42.7 276.0 49.5 280.0 55.7 283.7C61.9 287.4 68.1 291.2 74.3 294.9C80.5 298.6 88.2 303.2 92.9 306.0C97.6 308.8 99.1 310.2 102.2 311.6C105.3 313.0 106.9 313.7 111.5 314.5C116.1 315.3 125.7 315.6 129.6 316.3C133.5 317.0 132.5 317.7 134.7 318.9C136.8 320.1 140.3 322.7 142.5 323.3C144.7 323.9 146.8 322.5 147.6 322.3C150.2 321.3 156.2 319.0 163.1 316.3C170.0 313.6 178.4 310.1 188.9 306.0C199.4 301.9 213.2 296.2 225.8 291.5C238.4 286.8 252.8 282.0 264.7 277.6C276.5 273.2 290.0 267.9 296.9 265.2C303.8 262.5 304.7 262.1 306.3 261.5C306.6 260.9 306.9 259.4 308.0 257.8C309.1 256.2 310.3 253.9 313.0 251.6C315.7 249.3 319.8 247.1 324.1 244.2C328.4 241.3 333.9 237.8 338.9 234.3C343.8 230.8 350.1 226.1 353.8 223.2C357.5 220.3 359.6 218.9 361.2 217.0C362.8 215.1 363.8 213.8 363.6 212.0C363.4 210.2 362.1 208.0 360.0 205.9C357.9 203.8 354.8 201.8 351.3 199.7C347.8 197.6 343.2 195.6 338.9 193.5C334.6 191.4 329.0 189.4 325.3 187.3C321.6 185.2 318.6 183.0 316.7 181.1C314.8 179.2 314.3 176.6 313.8 175.7L255.5 160.0Z"/></clipPath>
<path d="M88.7 199.1C87.8 200.8 86.6 206.1 83.6 209.4C80.6 212.7 76.5 215.3 70.6 218.7C64.7 222.1 55.7 225.9 48.3 229.9C40.9 233.9 30.9 239.2 26.0 242.9C21.1 246.6 20.0 249.7 18.6 252.2C17.2 254.7 16.9 255.8 17.5 257.7C18.1 259.6 19.0 260.8 22.3 263.3C25.6 265.8 31.5 269.2 37.1 272.6C42.7 276.0 49.5 280.0 55.7 283.7C61.9 287.4 68.1 291.2 74.3 294.9C80.5 298.6 88.2 303.2 92.9 306.0C97.6 308.8 99.1 310.2 102.2 311.6C105.3 313.0 106.9 313.7 111.5 314.5C116.1 315.3 125.7 315.6 129.6 316.3C133.5 317.0 132.5 317.7 134.7 318.9C136.8 320.1 140.3 322.7 142.5 323.3C144.7 323.9 146.8 322.5 147.6 322.3C150.2 321.3 156.2 319.0 163.1 316.3C170.0 313.6 178.4 310.1 188.9 306.0C199.4 301.9 213.2 296.2 225.8 291.5C238.4 286.8 252.8 282.0 264.7 277.6C276.5 273.2 290.0 267.9 296.9 265.2C303.8 262.5 304.7 262.1 306.3 261.5C306.6 260.9 306.9 259.4 308.0 257.8C309.1 256.2 310.3 253.9 313.0 251.6C315.7 249.3 319.8 247.1 324.1 244.2C328.4 241.3 333.9 237.8 338.9 234.3C343.8 230.8 350.1 226.1 353.8 223.2C357.5 220.3 359.6 218.9 361.2 217.0C362.8 215.1 363.8 213.8 363.6 212.0C363.4 210.2 362.1 208.0 360.0 205.9C357.9 203.8 354.8 201.8 351.3 199.7C347.8 197.6 343.2 195.6 338.9 193.5C334.6 191.4 329.0 189.4 325.3 187.3C321.6 185.2 318.6 183.0 316.7 181.1C314.8 179.2 314.3 176.6 313.8 175.7L255.5 160.0Z" fill="url(#g1front)"/>
<g clip-path="url(#c1)">
<path d="M140.0 322.0C144.2 320.5 156.7 316.2 165.0 313.0C173.3 309.8 179.2 307.2 190.0 303.0C200.8 298.8 218.0 292.5 230.0 288.0C242.0 283.5 252.8 279.3 262.0 276.0C271.2 272.7 278.2 270.8 285.0 268.0C291.8 265.2 297.2 262.5 303.0 259.0C308.8 255.5 313.7 251.3 320.0 247.0C326.3 242.7 334.8 237.3 341.0 233.0C347.2 228.7 352.8 224.7 357.0 221.0C361.2 217.3 364.5 212.7 366.0 211.0" fill="none" stroke="url(#gband)" stroke-width="12" filter="url(#b4)" opacity="0.9"/>
<path d="M88.7 199.1C87.8 200.8 86.6 206.1 83.6 209.4C80.6 212.7 76.5 215.3 70.6 218.7C64.7 222.1 55.7 225.9 48.3 229.9C40.9 233.9 30.9 239.2 26.0 242.9C21.1 246.6 20.0 249.7 18.6 252.2C17.2 254.7 16.9 255.8 17.5 257.7C18.1 259.6 19.0 260.8 22.3 263.3C25.6 265.8 31.5 269.2 37.1 272.6C42.7 276.0 49.5 280.0 55.7 283.7C61.9 287.4 68.1 291.2 74.3 294.9C80.5 298.6 88.2 303.2 92.9 306.0C97.6 308.8 100.7 310.7 102.2 311.6L98.7 309.9C98.5 309.5 97.4 309.0 97.4 307.3C97.4 305.6 97.6 302.6 98.7 299.6C99.8 296.6 100.8 294.5 103.8 289.3C106.8 284.1 112.4 275.6 116.7 268.7C121.0 261.8 125.7 254.4 129.6 248.0C133.5 241.6 137.8 234.5 139.9 230.0C142.1 225.5 142.1 222.6 142.5 221.1Z" fill="url(#g1left)" filter="url(#b1)"/>
</g>
<path d="M88.7 199.1L255.5 160.0L313.8 175.7L142.5 221.1Z" fill="url(#g1top)"/>
<path d="M207.6 168L206.8 187" stroke="#5fbf86" stroke-width="1" fill="none" opacity="0.5"/>
<path d="M254 251L347 286.3" stroke="url(#gred1)" stroke-width="1" fill="none"/>
<clipPath id="c2u"><path d="M349.2 76.7C349.6 78.9 350.4 85.8 351.7 90.1C353.0 94.3 354.7 98.0 357.1 102.2C359.6 106.5 362.6 110.9 366.4 115.6C370.2 120.3 375.0 125.2 379.9 130.3C384.8 135.4 390.5 141.2 395.9 146.4C401.2 151.6 406.6 156.3 412.0 161.2C417.4 166.1 422.7 171.0 428.1 175.9C433.5 180.8 440.2 186.8 444.2 190.6C448.2 194.4 449.6 196.2 452.2 199.0C454.8 201.8 457.5 204.6 459.5 207.6C461.5 210.6 463.0 213.8 464.2 217.0C465.4 220.2 466.1 223.9 466.5 227.0C466.9 230.1 466.7 234.0 466.7 235.4L477.2 235.0C477.3 234.1 477.2 232.2 477.6 229.7C478.0 227.2 478.7 223.2 479.7 220.0C480.7 216.8 481.9 213.9 483.4 210.6C484.9 207.2 486.6 203.7 488.8 199.9C491.0 196.1 493.2 192.6 496.8 187.9C500.4 183.2 505.7 176.7 510.2 171.8C514.7 166.9 519.1 163.1 523.6 158.4C528.1 153.7 532.5 148.3 537.0 143.6C541.5 138.9 545.9 134.7 550.4 130.2C554.9 125.7 559.8 121.3 563.8 116.8C567.8 112.3 571.6 107.7 574.6 103.4C577.6 99.1 579.8 95.6 582.0 91.0C584.2 86.4 586.7 80.3 588.0 76.0C589.3 71.7 589.6 67.0 589.9 65.2L521.9 59.0Z"/></clipPath><clipPath id="c2l"><path d="M349.2 76.7C349.6 78.9 350.4 85.8 351.7 90.1C353.0 94.3 354.7 98.0 357.1 102.2C359.6 106.5 362.6 110.9 366.4 115.6C370.2 120.3 375.0 125.2 379.9 130.3C384.8 135.4 390.5 141.2 395.9 146.4C401.2 151.6 406.6 156.3 412.0 161.2C417.4 166.1 422.7 171.0 428.1 175.9C433.5 180.8 440.2 186.8 444.2 190.6C448.2 194.4 449.6 196.2 452.2 199.0C454.8 201.8 457.5 204.6 459.5 207.6C461.5 210.6 463.0 213.8 464.2 217.0C465.4 220.2 466.1 223.9 466.5 227.0C466.9 230.1 466.7 234.0 466.7 235.4L471.5 232.0C471.2 230.0 470.5 223.7 469.6 220.0C468.7 216.3 467.5 213.3 466.2 210.0C464.9 206.7 463.3 203.2 461.6 200.0C459.9 196.8 458.4 194.4 456.2 190.6C454.0 186.8 451.1 181.7 448.2 177.2C445.3 172.7 441.7 168.3 438.8 163.8C435.9 159.3 433.5 154.9 430.8 150.4C428.1 145.9 425.2 141.5 422.7 137.0C420.2 132.5 417.8 127.6 416.0 123.6C414.2 119.6 413.1 116.9 412.0 112.9C410.9 108.9 409.9 103.8 409.3 99.5C408.7 95.2 408.5 89.2 408.3 87.2Z"/></clipPath>
<path d="M349.2 76.7C349.6 78.9 350.4 85.8 351.7 90.1C353.0 94.3 354.7 98.0 357.1 102.2C359.6 106.5 362.6 110.9 366.4 115.6C370.2 120.3 375.0 125.2 379.9 130.3C384.8 135.4 390.5 141.2 395.9 146.4C401.2 151.6 406.6 156.3 412.0 161.2C417.4 166.1 422.7 171.0 428.1 175.9C433.5 180.8 440.2 186.8 444.2 190.6C448.2 194.4 449.6 196.2 452.2 199.0C454.8 201.8 457.5 204.6 459.5 207.6C461.5 210.6 463.0 213.8 464.2 217.0C465.4 220.2 466.1 223.9 466.5 227.0C466.9 230.1 466.7 234.0 466.7 235.4L477.2 235.0C477.3 234.1 477.2 232.2 477.6 229.7C478.0 227.2 478.7 223.2 479.7 220.0C480.7 216.8 481.9 213.9 483.4 210.6C484.9 207.2 486.6 203.7 488.8 199.9C491.0 196.1 493.2 192.6 496.8 187.9C500.4 183.2 505.7 176.7 510.2 171.8C514.7 166.9 519.1 163.1 523.6 158.4C528.1 153.7 532.5 148.3 537.0 143.6C541.5 138.9 545.9 134.7 550.4 130.2C554.9 125.7 559.8 121.3 563.8 116.8C567.8 112.3 571.6 107.7 574.6 103.4C577.6 99.1 579.8 95.6 582.0 91.0C584.2 86.4 586.7 80.3 588.0 76.0C589.3 71.7 589.6 67.0 589.9 65.2L521.9 59.0Z" fill="#cccccc"/>
<g clip-path="url(#c2u)"><rect x="407.8" y="60.0" width="183.1" height="2.1" fill="url(#f0)"/><rect x="407.8" y="61.5" width="183.1" height="2.1" fill="url(#f1)"/><rect x="407.8" y="63.0" width="183.1" height="2.1" fill="url(#f2)"/><rect x="407.8" y="64.5" width="183.1" height="2.1" fill="url(#f3)"/><rect x="407.8" y="66.0" width="182.9" height="2.1" fill="url(#f4)"/><rect x="407.8" y="67.5" width="182.7" height="2.1" fill="url(#f5)"/><rect x="407.8" y="69.0" width="182.5" height="2.1" fill="url(#f6)"/><rect x="407.8" y="70.5" width="182.3" height="2.1" fill="url(#f7)"/><rect x="407.8" y="72.0" width="182.0" height="2.1" fill="url(#f8)"/><rect x="407.8" y="73.5" width="181.7" height="2.1" fill="url(#f9)"/><rect x="407.8" y="75.0" width="181.3" height="2.1" fill="url(#f10)"/><rect x="407.8" y="76.5" width="180.8" height="2.1" fill="url(#f11)"/><rect x="407.8" y="78.0" width="180.3" height="2.1" fill="url(#f12)"/><rect x="407.8" y="79.5" width="179.8" height="2.1" fill="url(#f13)"/><rect x="407.8" y="81.0" width="179.2" height="2.1" fill="url(#f14)"/><rect x="407.8" y="82.5" width="178.6" height="2.1" fill="url(#f15)"/><rect x="407.8" y="84.0" width="178.0" height="2.1" fill="url(#f16)"/><rect x="407.8" y="85.5" width="177.4" height="2.1" fill="url(#f17)"/><rect x="407.8" y="87.0" width="176.7" height="2.1" fill="url(#f18)"/><rect x="407.9" y="88.5" width="175.9" height="2.1" fill="url(#f19)"/><rect x="408.0" y="90.0" width="175.1" height="2.1" fill="url(#f20)"/><rect x="408.1" y="91.5" width="174.3" height="2.1" fill="url(#f21)"/><rect x="408.2" y="93.0" width="173.4" height="2.1" fill="url(#f22)"/><rect x="408.3" y="94.5" width="172.4" height="2.1" fill="url(#f23)"/><rect x="408.5" y="96.0" width="171.4" height="2.1" fill="url(#f24)"/><rect x="408.6" y="97.5" width="170.4" height="2.1" fill="url(#f25)"/><rect x="408.8" y="99.0" width="169.2" height="2.1" fill="url(#f26)"/><rect x="409.1" y="100.5" width="168.0" height="2.1" fill="url(#f27)"/><rect x="409.3" y="102.0" width="166.7" height="2.1" fill="url(#f28)"/><rect x="409.6" y="103.5" width="165.4" height="2.1" fill="url(#f29)"/><rect x="409.9" y="105.0" width="164.0" height="2.1" fill="url(#f30)"/><rect x="410.2" y="106.5" width="162.6" height="2.1" fill="url(#f31)"/><rect x="410.5" y="108.0" width="161.1" height="2.1" fill="url(#f32)"/><rect x="410.8" y="109.5" width="159.6" height="2.1" fill="url(#f33)"/><rect x="411.2" y="111.0" width="158.0" height="2.1" fill="url(#f34)"/><rect x="411.6" y="112.5" width="156.3" height="2.1" fill="url(#f35)"/><rect x="412.0" y="114.0" width="154.6" height="2.1" fill="url(#f36)"/><rect x="412.5" y="115.5" width="152.8" height="2.1" fill="url(#f37)"/><rect x="413.1" y="117.0" width="150.9" height="2.1" fill="url(#f38)"/><rect x="413.6" y="118.5" width="148.9" height="2.1" fill="url(#f39)"/><rect x="414.3" y="120.0" width="146.8" height="2.1" fill="url(#f40)"/><rect x="414.9" y="121.5" width="144.6" height="2.1" fill="url(#f41)"/><rect x="415.6" y="123.0" width="142.4" height="2.1" fill="url(#f42)"/><rect x="416.2" y="124.5" width="140.2" height="2.1" fill="url(#f43)"/><rect x="416.9" y="126.0" width="138.0" height="2.1" fill="url(#f44)"/><rect x="417.7" y="127.5" width="135.7" height="2.1" fill="url(#f45)"/><rect x="418.4" y="129.0" width="133.4" height="2.1" fill="url(#f46)"/><rect x="419.2" y="130.5" width="131.2" height="2.1" fill="url(#f47)"/><rect x="419.9" y="132.0" width="128.9" height="2.1" fill="url(#f48)"/><rect x="420.7" y="133.5" width="126.6" height="2.1" fill="url(#f49)"/><rect x="421.5" y="135.0" width="124.3" height="2.1" fill="url(#f50)"/><rect x="422.3" y="136.5" width="121.9" height="2.1" fill="url(#f51)"/><rect x="423.2" y="138.0" width="119.6" height="2.1" fill="url(#f52)"/><rect x="424.1" y="139.5" width="117.2" height="2.1" fill="url(#f53)"/><rect x="425.0" y="141.0" width="114.8" height="2.1" fill="url(#f54)"/><rect x="425.9" y="142.5" width="112.4" height="2.1" fill="url(#f55)"/><rect x="426.8" y="144.0" width="110.1" height="2.1" fill="url(#f56)"/><rect x="427.8" y="145.5" width="107.8" height="2.1" fill="url(#f57)"/><rect x="428.7" y="147.0" width="105.5" height="2.1" fill="url(#f58)"/><rect x="429.6" y="148.5" width="103.2" height="2.1" fill="url(#f59)"/><rect x="430.5" y="150.0" width="101.0" height="2.1" fill="url(#f60)"/><rect x="431.4" y="151.5" width="98.8" height="2.1" fill="url(#f61)"/><rect x="432.3" y="153.0" width="96.6" height="2.1" fill="url(#f62)"/><rect x="433.1" y="154.5" width="94.4" height="2.1" fill="url(#f63)"/><rect x="434.0" y="156.0" width="92.1" height="2.1" fill="url(#f64)"/><rect x="434.9" y="157.5" width="89.8" height="2.1" fill="url(#f65)"/><rect x="435.8" y="159.0" width="87.5" height="2.1" fill="url(#f66)"/><rect x="436.7" y="160.5" width="85.1" height="2.1" fill="url(#f67)"/><rect x="437.6" y="162.0" width="82.6" height="2.1" fill="url(#f68)"/><rect x="438.6" y="163.5" width="80.1" height="2.1" fill="url(#f69)"/><rect x="439.6" y="165.0" width="77.5" height="2.1" fill="url(#f70)"/><rect x="440.7" y="166.5" width="74.9" height="2.1" fill="url(#f71)"/><rect x="441.7" y="168.0" width="72.4" height="2.1" fill="url(#f72)"/><rect x="442.8" y="169.5" width="69.8" height="2.1" fill="url(#f73)"/><rect x="443.9" y="171.0" width="67.3" height="2.1" fill="url(#f74)"/><rect x="445.0" y="172.5" width="64.9" height="2.1" fill="url(#f75)"/><rect x="446.0" y="174.0" width="62.5" height="2.1" fill="url(#f76)"/><rect x="447.1" y="175.5" width="60.2" height="2.1" fill="url(#f77)"/><rect x="448.1" y="177.0" width="57.9" height="2.1" fill="url(#f78)"/><rect x="449.0" y="178.5" width="55.7" height="2.1" fill="url(#f79)"/><rect x="449.9" y="180.0" width="53.6" height="2.1" fill="url(#f80)"/><rect x="450.8" y="181.5" width="51.4" height="2.1" fill="url(#f81)"/><rect x="451.7" y="183.0" width="49.3" height="2.1" fill="url(#f82)"/><rect x="452.6" y="184.5" width="47.3" height="2.1" fill="url(#f83)"/><rect x="453.5" y="186.0" width="45.2" height="2.1" fill="url(#f84)"/><rect x="454.3" y="187.5" width="43.2" height="2.1" fill="url(#f85)"/><rect x="455.2" y="189.0" width="41.2" height="2.1" fill="url(#f86)"/><rect x="456.1" y="190.5" width="39.3" height="2.1" fill="url(#f87)"/><rect x="457.0" y="192.0" width="37.3" height="2.1" fill="url(#f88)"/><rect x="457.9" y="193.5" width="35.4" height="2.1" fill="url(#f89)"/><rect x="458.8" y="195.0" width="33.6" height="2.1" fill="url(#f90)"/><rect x="459.6" y="196.5" width="31.8" height="2.1" fill="url(#f91)"/><rect x="460.4" y="198.0" width="30.0" height="2.1" fill="url(#f92)"/><rect x="461.2" y="199.5" width="28.4" height="2.1" fill="url(#f93)"/><rect x="462.0" y="201.0" width="26.8" height="2.1" fill="url(#f94)"/><rect x="462.7" y="202.5" width="25.2" height="2.1" fill="url(#f95)"/><rect x="463.4" y="204.0" width="23.7" height="2.1" fill="url(#f96)"/><rect x="464.1" y="205.5" width="22.3" height="2.1" fill="url(#f97)"/><rect x="464.8" y="207.0" width="20.9" height="2.1" fill="url(#f98)"/><rect x="465.4" y="208.5" width="19.6" height="2.1" fill="url(#f99)"/><rect x="466.0" y="210.0" width="18.3" height="2.1" fill="url(#f100)"/><rect x="466.6" y="211.5" width="17.1" height="2.1" fill="url(#f101)"/><rect x="467.2" y="213.0" width="15.9" height="2.1" fill="url(#f102)"/><rect x="467.7" y="214.5" width="14.7" height="2.1" fill="url(#f103)"/><rect x="468.2" y="216.0" width="13.6" height="2.1" fill="url(#f104)"/><rect x="468.6" y="217.5" width="12.6" height="2.1" fill="url(#f105)"/><rect x="469.0" y="219.0" width="11.7" height="2.1" fill="url(#f106)"/><rect x="469.4" y="220.5" width="11.0" height="2.1" fill="url(#f107)"/><rect x="469.7" y="222.0" width="10.3" height="2.1" fill="url(#f108)"/><rect x="469.9" y="223.5" width="9.7" height="2.1" fill="url(#f109)"/><rect x="470.1" y="225.0" width="9.2" height="2.1" fill="url(#f110)"/><rect x="470.3" y="226.5" width="8.7" height="2.1" fill="url(#f111)"/><rect x="470.6" y="228.0" width="8.2" height="2.1" fill="url(#f112)"/><rect x="470.8" y="229.5" width="7.8" height="2.1" fill="url(#f113)"/><rect x="471.0" y="231.0" width="7.4" height="2.1" fill="url(#f114)"/><rect x="471.0" y="232.5" width="7.3" height="2.1" fill="url(#f115)"/><rect x="471.0" y="234.0" width="7.2" height="2.1" fill="url(#f116)"/><rect x="471.0" y="235.5" width="7.2" height="2.1" fill="url(#f117)"/></g>
<g clip-path="url(#c2l)"><rect x="348.2" y="60.0" width="60.6" height="2.1" fill="url(#l0)"/><rect x="348.2" y="61.5" width="60.6" height="2.1" fill="url(#l1)"/><rect x="348.2" y="63.0" width="60.6" height="2.1" fill="url(#l2)"/><rect x="348.2" y="64.5" width="60.6" height="2.1" fill="url(#l3)"/><rect x="348.2" y="66.0" width="60.6" height="2.1" fill="url(#l4)"/><rect x="348.2" y="67.5" width="60.6" height="2.1" fill="url(#l5)"/><rect x="348.2" y="69.0" width="60.6" height="2.1" fill="url(#l6)"/><rect x="348.2" y="70.5" width="60.6" height="2.1" fill="url(#l7)"/><rect x="348.2" y="72.0" width="60.6" height="2.1" fill="url(#l8)"/><rect x="348.2" y="73.5" width="60.6" height="2.1" fill="url(#l9)"/><rect x="348.2" y="75.0" width="60.6" height="2.1" fill="url(#l10)"/><rect x="348.3" y="76.5" width="60.5" height="2.1" fill="url(#l11)"/><rect x="348.5" y="78.0" width="60.3" height="2.1" fill="url(#l12)"/><rect x="348.7" y="79.5" width="60.1" height="2.1" fill="url(#l13)"/><rect x="349.0" y="81.0" width="59.8" height="2.1" fill="url(#l14)"/><rect x="349.2" y="82.5" width="59.6" height="2.1" fill="url(#l15)"/><rect x="349.5" y="84.0" width="59.3" height="2.1" fill="url(#l16)"/><rect x="349.8" y="85.5" width="59.0" height="2.1" fill="url(#l17)"/><rect x="350.1" y="87.0" width="58.8" height="2.1" fill="url(#l18)"/><rect x="350.5" y="88.5" width="58.5" height="2.1" fill="url(#l19)"/><rect x="350.9" y="90.0" width="58.1" height="2.1" fill="url(#l20)"/><rect x="351.4" y="91.5" width="57.7" height="2.1" fill="url(#l21)"/><rect x="352.0" y="93.0" width="57.2" height="2.1" fill="url(#l22)"/><rect x="352.6" y="94.5" width="56.8" height="2.1" fill="url(#l23)"/><rect x="353.3" y="96.0" width="56.2" height="2.1" fill="url(#l24)"/><rect x="354.0" y="97.5" width="55.7" height="2.1" fill="url(#l25)"/><rect x="354.7" y="99.0" width="55.1" height="2.1" fill="url(#l26)"/><rect x="355.6" y="100.5" width="54.5" height="2.1" fill="url(#l27)"/><rect x="356.4" y="102.0" width="53.9" height="2.1" fill="url(#l28)"/><rect x="357.3" y="103.5" width="53.3" height="2.1" fill="url(#l29)"/><rect x="358.3" y="105.0" width="52.6" height="2.1" fill="url(#l30)"/><rect x="359.2" y="106.5" width="51.9" height="2.1" fill="url(#l31)"/><rect x="360.3" y="108.0" width="51.2" height="2.1" fill="url(#l32)"/><rect x="361.3" y="109.5" width="50.5" height="2.1" fill="url(#l33)"/><rect x="362.4" y="111.0" width="49.8" height="2.1" fill="url(#l34)"/><rect x="363.5" y="112.5" width="49.1" height="2.1" fill="url(#l35)"/><rect x="364.7" y="114.0" width="48.3" height="2.1" fill="url(#l36)"/><rect x="365.9" y="115.5" width="47.6" height="2.1" fill="url(#l37)"/><rect x="367.2" y="117.0" width="46.9" height="2.1" fill="url(#l38)"/><rect x="368.5" y="118.5" width="46.1" height="2.1" fill="url(#l39)"/><rect x="369.9" y="120.0" width="45.4" height="2.1" fill="url(#l40)"/><rect x="371.2" y="121.5" width="44.7" height="2.1" fill="url(#l41)"/><rect x="372.6" y="123.0" width="43.9" height="2.1" fill="url(#l42)"/><rect x="374.1" y="124.5" width="43.2" height="2.1" fill="url(#l43)"/><rect x="375.5" y="126.0" width="42.5" height="2.1" fill="url(#l44)"/><rect x="376.9" y="127.5" width="41.7" height="2.1" fill="url(#l45)"/><rect x="378.4" y="129.0" width="41.0" height="2.1" fill="url(#l46)"/><rect x="379.8" y="130.5" width="40.3" height="2.1" fill="url(#l47)"/><rect x="381.3" y="132.0" width="39.7" height="2.1" fill="url(#l48)"/><rect x="382.7" y="133.5" width="39.0" height="2.1" fill="url(#l49)"/><rect x="384.2" y="135.0" width="38.3" height="2.1" fill="url(#l50)"/><rect x="385.7" y="136.5" width="37.7" height="2.1" fill="url(#l51)"/><rect x="387.1" y="138.0" width="37.0" height="2.1" fill="url(#l52)"/><rect x="388.6" y="139.5" width="36.4" height="2.1" fill="url(#l53)"/><rect x="390.1" y="141.0" width="35.8" height="2.1" fill="url(#l54)"/><rect x="391.7" y="142.5" width="35.2" height="2.1" fill="url(#l55)"/><rect x="393.2" y="144.0" width="34.6" height="2.1" fill="url(#l56)"/><rect x="394.7" y="145.5" width="34.0" height="2.1" fill="url(#l57)"/><rect x="396.3" y="147.0" width="33.4" height="2.1" fill="url(#l58)"/><rect x="397.9" y="148.5" width="32.7" height="2.1" fill="url(#l59)"/><rect x="399.5" y="150.0" width="32.0" height="2.1" fill="url(#l60)"/><rect x="401.1" y="151.5" width="31.2" height="2.1" fill="url(#l61)"/><rect x="402.8" y="153.0" width="30.5" height="2.1" fill="url(#l62)"/><rect x="404.4" y="154.5" width="29.7" height="2.1" fill="url(#l63)"/><rect x="406.1" y="156.0" width="28.9" height="2.1" fill="url(#l64)"/><rect x="407.8" y="157.5" width="28.1" height="2.1" fill="url(#l65)"/><rect x="409.4" y="159.0" width="27.4" height="2.1" fill="url(#l66)"/><rect x="411.1" y="160.5" width="26.6" height="2.1" fill="url(#l67)"/><rect x="412.7" y="162.0" width="25.9" height="2.1" fill="url(#l68)"/><rect x="414.3" y="163.5" width="25.3" height="2.1" fill="url(#l69)"/><rect x="416.0" y="165.0" width="24.6" height="2.1" fill="url(#l70)"/><rect x="417.6" y="166.5" width="24.0" height="2.1" fill="url(#l71)"/><rect x="419.3" y="168.0" width="23.5" height="2.1" fill="url(#l72)"/><rect x="420.9" y="169.5" width="22.9" height="2.1" fill="url(#l73)"/><rect x="422.6" y="171.0" width="22.4" height="2.1" fill="url(#l74)"/><rect x="424.2" y="172.5" width="21.8" height="2.1" fill="url(#l75)"/><rect x="425.8" y="174.0" width="21.2" height="2.1" fill="url(#l76)"/><rect x="427.5" y="175.5" width="20.6" height="2.1" fill="url(#l77)"/><rect x="429.1" y="177.0" width="19.9" height="2.1" fill="url(#l78)"/><rect x="430.8" y="178.5" width="19.2" height="2.1" fill="url(#l79)"/><rect x="432.5" y="180.0" width="18.5" height="2.1" fill="url(#l80)"/><rect x="434.1" y="181.5" width="17.7" height="2.1" fill="url(#l81)"/><rect x="435.8" y="183.0" width="16.9" height="2.1" fill="url(#l82)"/><rect x="437.4" y="184.5" width="16.2" height="2.1" fill="url(#l83)"/><rect x="439.1" y="186.0" width="15.4" height="2.1" fill="url(#l84)"/><rect x="440.7" y="187.5" width="14.6" height="2.1" fill="url(#l85)"/><rect x="442.3" y="189.0" width="13.9" height="2.1" fill="url(#l86)"/><rect x="443.9" y="190.5" width="13.2" height="2.1" fill="url(#l87)"/><rect x="445.4" y="192.0" width="12.6" height="2.1" fill="url(#l88)"/><rect x="446.9" y="193.5" width="12.0" height="2.1" fill="url(#l89)"/><rect x="448.3" y="195.0" width="11.5" height="2.1" fill="url(#l90)"/><rect x="449.6" y="196.5" width="11.0" height="2.1" fill="url(#l91)"/><rect x="451.0" y="198.0" width="10.5" height="2.1" fill="url(#l92)"/><rect x="452.3" y="199.5" width="9.9" height="2.1" fill="url(#l93)"/><rect x="453.7" y="201.0" width="9.3" height="2.1" fill="url(#l94)"/><rect x="455.1" y="202.5" width="8.7" height="2.1" fill="url(#l95)"/><rect x="456.4" y="204.0" width="8.1" height="2.1" fill="url(#l96)"/><rect x="457.5" y="205.5" width="7.6" height="2.1" fill="url(#l97)"/><rect x="458.6" y="207.0" width="7.2" height="2.1" fill="url(#l98)"/><rect x="459.5" y="208.5" width="6.9" height="2.1" fill="url(#l99)"/><rect x="460.4" y="210.0" width="6.6" height="2.1" fill="url(#l100)"/><rect x="461.2" y="211.5" width="6.4" height="2.1" fill="url(#l101)"/><rect x="461.9" y="213.0" width="6.3" height="2.1" fill="url(#l102)"/><rect x="462.5" y="214.5" width="6.2" height="2.1" fill="url(#l103)"/><rect x="463.1" y="216.0" width="6.1" height="2.1" fill="url(#l104)"/><rect x="463.6" y="217.5" width="6.0" height="2.1" fill="url(#l105)"/><rect x="464.1" y="219.0" width="6.0" height="2.1" fill="url(#l106)"/><rect x="464.4" y="220.5" width="5.9" height="2.1" fill="url(#l107)"/><rect x="464.8" y="222.0" width="5.9" height="2.1" fill="url(#l108)"/><rect x="465.1" y="223.5" width="5.8" height="2.1" fill="url(#l109)"/><rect x="465.3" y="225.0" width="5.8" height="2.1" fill="url(#l110)"/><rect x="465.5" y="226.5" width="5.8" height="2.1" fill="url(#l111)"/><rect x="465.7" y="228.0" width="5.9" height="2.1" fill="url(#l112)"/><rect x="465.7" y="229.5" width="6.0" height="2.1" fill="url(#l113)"/><rect x="465.7" y="231.0" width="6.2" height="2.1" fill="url(#l114)"/><rect x="465.7" y="232.5" width="6.3" height="2.1" fill="url(#l115)"/><rect x="465.7" y="234.0" width="6.3" height="2.1" fill="url(#l116)"/><rect x="465.7" y="235.5" width="6.3" height="2.1" fill="url(#l117)"/></g>
<path d="M349.2 76.7L521.9 59.0L589.9 65.2L408.3 87.2Z" fill="url(#g2top)"/>
<path d="M466.7 235.4C466.5 237.6 466.7 244.3 465.5 248.6C464.3 252.8 461.9 256.8 459.3 260.9C456.7 265.0 452.7 269.8 450.0 273.3C447.3 276.8 448.3 276.2 443.2 282.0C438.1 287.8 425.6 301.7 419.3 308.0C413.1 314.3 410.2 315.7 405.7 320.0C401.2 324.3 396.4 329.1 392.1 333.6C387.8 338.1 383.4 342.4 379.7 347.2C376.0 351.9 372.5 357.4 369.8 362.1C367.1 366.9 364.9 371.6 363.6 375.7C362.3 379.8 362.2 384.9 361.9 386.8L410.6 427.7L565.1 349.1C565.0 347.8 565.5 344.5 564.4 341.4C563.3 338.3 561.4 334.4 558.3 330.5C555.2 326.6 550.5 322.5 545.9 318.1C541.2 313.7 536.1 308.8 530.4 304.2C524.7 299.6 517.6 294.9 511.9 290.3C506.2 285.7 501.0 281.3 496.4 276.4C491.8 271.5 487.1 266.0 484.0 260.9C480.9 255.7 478.9 249.8 477.8 245.5C476.7 241.2 477.3 236.8 477.2 235.0Z" fill="url(#g2lf)"/>
<path d="M466.7 235.4C466.5 237.6 466.7 244.3 465.5 248.6C464.3 252.8 461.9 256.8 459.3 260.9C456.7 265.0 452.7 269.8 450.0 273.3C447.3 276.8 448.3 276.2 443.2 282.0C438.1 287.8 425.6 301.7 419.3 308.0C413.1 314.3 410.2 315.7 405.7 320.0C401.2 324.3 396.4 329.1 392.1 333.6C387.8 338.1 383.4 342.4 379.7 347.2C376.0 351.9 372.5 357.4 369.8 362.1C367.1 366.9 364.9 371.6 363.6 375.7C362.3 379.8 362.2 384.9 361.9 386.8L410.6 427.7C410.8 425.4 411.1 418.9 411.9 414.1C412.7 409.4 414.0 405.0 415.6 399.2C417.2 393.4 419.5 386.4 421.8 379.4C424.1 372.4 426.7 364.1 429.2 357.1C431.7 350.1 434.2 343.5 436.6 337.3C439.1 331.1 442.0 324.5 443.9 320.0C445.8 315.5 445.8 315.1 447.7 310.4C449.6 305.7 452.6 298.1 455.0 291.9C457.4 285.7 460.4 279.0 462.4 273.3C464.4 267.6 465.9 262.1 467.0 257.8C468.1 253.5 468.3 250.4 469.1 247.3C469.9 244.2 471.2 241.9 471.6 239.3C472.0 236.8 471.5 233.2 471.5 232.0Z" fill="#f3f3f3"/>
<rect x="467.2" y="233.5" width="9.6" height="4" fill="#d2d2d2"/>
<path d="M477.6 60L477.3 71" stroke="#6fc693" stroke-width="1" fill="none" opacity="0.5"/>
</svg>
<div class="a" style="left:731.5px;top:0;width:835.5px;height:485px;background:#3b3b3b;"></div>
<div class="a" style="left:734.3px;top:3.8px;width:828.7px;height:481.2px;background:#3d3d3d;border-top:1px solid #4b4b4b;border-left:1px solid #4b4b4b;box-sizing:border-box;"></div>
<div class="a" style="left:1563px;top:0;width:4px;height:485px;background:#474747;"></div>
<div class="a" style="left:736px;top:27px;width:827px;height:1px;background:#4b4b4b;"></div>
<div class="a" style="left:736px;top:55px;width:778px;height:430px;background-color:#424242;background-image:linear-gradient(to right,#4b4b4b 1px,transparent 1px),linear-gradient(to right,#474747 1px,transparent 1px),linear-gradient(to bottom,#474747 1px,transparent 1px);background-size:128px 128px,32px 32px,32px 32px;background-position:73px 0,9px 23px,9px 23px;"></div>
<div class="a" style="left:1514px;top:55px;width:49px;height:430px;background:#2a2a2a;"></div>
<div class="a" style="left:741px;top:11px;width:14px;height:2px;background:#f0f0f0;"></div>
<div class="a" style="left:741px;top:15px;width:14px;height:2px;background:#f0f0f0;"></div>
<div class="a" style="left:741px;top:19px;width:14px;height:2px;background:#f0f0f0;"></div>
<span class="t" style="left:765.20px;top:9.32px;font-size:11.7px;color:#dadada;letter-spacing:-0.489px;">Crea</span>
<span class="t" style="left:804.40px;top:9.32px;font-size:11.7px;color:#dadada;letter-spacing:0.074px;">Modifica</span>
<span class="t" style="left:864.20px;top:9.32px;font-size:11.7px;color:#dadada;letter-spacing:-0.078px;">Vista</span>
<span class="t" style="left:905.50px;top:9.32px;font-size:11.7px;color:#dadada;letter-spacing:-0.125px;">Nodo</span>
<span class="t" style="left:948.40px;top:9.32px;font-size:11.7px;color:#dadada;letter-spacing:-0.090px;">Asset</span>
<span class="t" style="left:992.00px;top:9.32px;font-size:11.7px;color:#dadada;letter-spacing:0.079px;">Modo</span>
<div class="a" style="left:739.8px;top:34px;width:106.2px;height:16px;border-radius:3px;background:#5a5a5a;"></div>
<span class="t" style="left:750.80px;top:36.12px;font-size:11.7px;color:#dadada;letter-spacing:0.053px;">Aggiungi Nodi...</span>
<span class="t" style="left:870.10px;top:36.12px;font-size:11.7px;color:#dadada;letter-spacing:0.011px;">Nodi</span>
<div class="a" style="left:1303.6px;top:33px;width:252.9000000000001px;height:17.5px;border-radius:3.5px;background:#333333;border:1px solid #505050;box-sizing:border-box;"></div>
<span class="t" style="left:1312.20px;top:36.32px;font-size:11.7px;color:#8a8a8a;letter-spacing:-0.204px;font-style:italic;">Evidenzia</span>
<svg class="a" style="left:1524px;top:4px" width="40" height="22" viewBox="1524 4 40 22" fill="none" stroke="#9a9a9a" stroke-width="1.1">
<rect x="1528.8" y="13.5" width="11" height="8.7" rx="1.5"/><path d="M1531.3 13.5v-2.2a3 3 0 0 1 6 0v0.6"/><circle cx="1534.3" cy="18" r="0.9" fill="#b0b0b0" stroke="none"/>
<rect x="1548.6" y="8.8" width="10" height="12.8" stroke="#a8a8a8"/><path d="M1548.6 8.6h10" stroke="#a8a8a8" stroke-width="1.8"/><path d="M1553.6 12.6v6M1550.6 15.6h6" stroke="#c0c0c0" stroke-width="1.4"/>
</svg>
<svg class="a" style="left:736px;top:55px" width="831" height="430" viewBox="736 55 831 430" fill="none">
<path d="M930 217.3H1322" stroke="#bebebe" stroke-width="4.1"/>
<path d="M1453 197C1490 197 1478 65 1511 65" stroke="#777777" stroke-width="4.1"/>
<path d="M934 237.4C960 237.4 940 405.4 966 405.4" stroke="#5e95ca" stroke-width="1.1"/>
<path d="M1101 385.1H1131" stroke="#c98b3e" stroke-width="1.2"/>
<path d="M1267 345.1C1295 345.1 1290 276.9 1318 276.9" stroke="#c98b3e" stroke-width="1.2"/>
</svg>
<span class="t" style="left:826.70px;top:137.96px;font-size:14.1px;color:#7c7c7c;letter-spacing:0.055px;">Primitiva</span>
<span class="t" style="left:826.70px;top:157.01px;font-size:14.1px;color:#ececec;letter-spacing:0.029px;">Cubo</span>
<svg class="a" style="left:805px;top:154px" width="18" height="18" viewBox="805 154 18 18">
<path d="M813.5 156.4L819.6 159.8V166.5L813.5 170L807.5 166.5V159.8Z" fill="#8ecbf9" stroke="#8ecbf9" stroke-width="1.4" stroke-linejoin="round"/>
<path d="M808.8 160.3L813.6 162.7L818.4 160.3M813.6 162.7V169.2" fill="none" stroke="#4f86c2" stroke-width="1"/></svg>
<div class="node" style="left:802.3px;top:175.5px;width:127.8px;height:282.5px;"></div>
<div class="mi" style="left:913.40px;top:181.50px;"><i style="top:0"></i><i style="top:4.3px"></i><i style="top:8.6px"></i></div>
<div class="bar" style="left:810.7px;top:199.2px;width:111.8px;background:#5cb2d4;"></div>
<span class="t" style="left:855.20px;top:211.92px;font-size:11.7px;color:#dadada;letter-spacing:0.018px;">Op. Output</span>
<svg class="a" style="left:916.40px;top:215.60px" width="6" height="5" viewBox="0 0 6 5"><path d="M0.6 0.5h4.8L3 4.6z" fill="#e0e0e0"/></svg>
<span class="t" style="left:851.10px;top:231.92px;font-size:11.7px;color:#dadada;letter-spacing:-0.216px;">Geometria</span>
<div class="port" style="left:925.40px;top:212.70px;background:radial-gradient(circle,#8e8e8e 0,#8e8e8e 2.2px,#949494 3.4px);"></div>
<div class="port" style="left:925.40px;top:232.90px;background:radial-gradient(circle,#5fa2e0 0,#5fa2e0 2.2px,#62a4e2 3.4px);"></div>
<span class="t" style="left:820.30px;top:251.92px;font-size:11.7px;color:#dadada;letter-spacing:-0.079px;">Op. Input</span>
<div class="port" style="left:797.60px;top:252.90px;background:radial-gradient(circle,#4a78a8 0,#4a78a8 2.2px,#78a4da 3.4px);"></div>
<svg class="a" style="left:811.10px;top:275.80px" width="6" height="5" viewBox="0 0 6 5"><path d="M0.6 0.5h4.8L3 4.6z" fill="#e0e0e0"/></svg>
<span class="t" style="left:820.30px;top:271.92px;font-size:11.7px;color:#dadada;letter-spacing:-0.127px;">Parametri</span>
<div class="port" style="left:797.60px;top:272.90px;background:radial-gradient(circle,#6c6c6c 0,#6c6c6c 2.2px,#8a8a8a 3.4px);"></div>
<span class="t" style="left:828.30px;top:291.92px;font-size:11.7px;color:#dadada;letter-spacing:-0.153px;">Dimensione</span>
<div class="port" style="left:797.60px;top:292.90px;background:radial-gradient(circle,#8768b2 0,#8768b2 2.2px,#a98ae2 3.4px);"></div>
<span class="t" style="left:828.30px;top:311.92px;font-size:11.7px;color:#dadada;letter-spacing:-0.197px;">Segmenti X</span>
<div class="port" style="left:797.60px;top:312.90px;background:radial-gradient(circle,#929292 0,#929292 2.2px,#c8c8c8 3.4px);"></div>
<span class="t" style="left:828.30px;top:331.92px;font-size:11.7px;color:#dadada;letter-spacing:-0.174px;">Segmenti Y</span>
<div class="port" style="left:797.60px;top:332.90px;background:radial-gradient(circle,#929292 0,#929292 2.2px,#c8c8c8 3.4px);"></div>
<span class="t" style="left:828.30px;top:351.92px;font-size:11.7px;color:#dadada;letter-spacing:-0.125px;">Segmenti Z</span>
<div class="port" style="left:797.60px;top:352.90px;background:radial-gradient(circle,#929292 0,#929292 2.2px,#c8c8c8 3.4px);"></div>
<span class="t" style="left:828.30px;top:371.92px;font-size:11.7px;color:#dadada;letter-spacing:0.053px;">Abilita</span>
<div class="port" style="left:797.60px;top:372.90px;background:radial-gradient(circle,#4a78a8 0,#4a78a8 2.2px,#78a4da 3.4px);"></div>
<span class="t" style="left:828.30px;top:391.92px;font-size:11.7px;color:#dadada;letter-spacing:-0.105px;">Segmenti</span>
<div class="port" style="left:797.60px;top:392.90px;background:radial-gradient(circle,#929292 0,#929292 2.2px,#c8c8c8 3.4px);"></div>
<span class="t" style="left:828.30px;top:411.92px;font-size:11.7px;color:#dadada;letter-spacing:-0.375px;">Raggio</span>
<div class="port" style="left:797.60px;top:412.90px;background:radial-gradient(circle,#929292 0,#929292 2.2px,#c8c8c8 3.4px);"></div>
<span class="t" style="left:828.30px;top:431.92px;font-size:11.7px;color:#dadada;letter-spacing:0.012px;">Superfici Separ...</span>
<div class="port" style="left:797.60px;top:432.90px;background:radial-gradient(circle,#4a78a8 0,#4a78a8 2.2px,#78a4da 3.4px);"></div>
<svg class="a" style="left:800px;top:210px" width="140" height="240" viewBox="800 210 140 240"><path d="M814.1 282.3V434.8Q814.1 437.8 817 437.8H821 M814.1 297.8H821 M814.1 317.8H821 M814.1 337.8H821 M814.1 357.8H821 M814.1 377.8H821 M814.1 397.8H821 M814.1 417.8H821" fill="none" stroke="#535353" stroke-width="1"/><circle cx="821.6" cy="297.8" r="1.4" fill="#5a5a5a"/><circle cx="821.6" cy="317.8" r="1.4" fill="#5a5a5a"/><circle cx="821.6" cy="337.8" r="1.4" fill="#5a5a5a"/><circle cx="821.6" cy="357.8" r="1.4" fill="#5a5a5a"/><circle cx="821.6" cy="377.8" r="1.4" fill="#5a5a5a"/><circle cx="821.6" cy="397.8" r="1.4" fill="#5a5a5a"/><circle cx="821.6" cy="417.8" r="1.4" fill="#5a5a5a"/><circle cx="821.6" cy="437.8" r="1.4" fill="#5a5a5a"/><path d="M919.4 221.8V235.8Q919.4 237.8 917.4 237.8H911" fill="none" stroke="#535353" stroke-width="1"/><circle cx="910.7" cy="237.8" r="1.4" fill="#5a5a5a"/></svg>
<span class="t" style="left:994.00px;top:264.81px;font-size:14.1px;color:#ececec;letter-spacing:0.068px;">Box Delimitante</span>
<svg class="a" style="left:971px;top:261px" width="19" height="19" viewBox="971 261 19 19">
<path d="M980.5 263.5L987.4 267.4V274.1L980.5 278.1L973.4 274.1V267.4Z" fill="#343434"/><path d="M973.3 270.7L980.5 274.4V278.4L973.3 274.3Z" fill="#f0a132"/><path d="M987.5 270.7L980.5 274.4V278.4L987.5 274.3Z" fill="#c9c9da"/>
<path d="M980.5 263.5L987.4 267.4V274.1L980.5 278.1L973.4 274.1V267.4ZM973.4 267.4L980.5 271L987.4 267.4M980.5 271V275" fill="none" stroke="#857565" stroke-width="1"/>
<circle cx="980.5" cy="263.8" r="1.15" fill="#e0e0e0"/><circle cx="974" cy="267.5" r="1.15" fill="#e0e0e0"/><circle cx="980.5" cy="271" r="1.1" fill="#d8d8d8"/></svg>
<div class="node" style="left:969.8px;top:284px;width:127.3px;height:142.3px;"></div>
<div class="mi" style="left:1080.30px;top:289.30px;"><i style="top:0"></i><i style="top:4.3px"></i><i style="top:8.6px"></i></div>
<div class="bar" style="left:977.6px;top:307.3px;width:111.8px;background:#c18a52;"></div>
<span class="t" style="left:1057.50px;top:319.32px;font-size:11.7px;color:#dadada;letter-spacing:-0.624px;">Min</span>
<div class="port" style="left:1092.80px;top:320.60px;background:radial-gradient(circle,#8768b2 0,#8768b2 2.2px,#a98ae2 3.4px);"></div>
<span class="t" style="left:1057.50px;top:339.22px;font-size:11.7px;color:#dadada;letter-spacing:-0.551px;">Max</span>
<div class="port" style="left:1092.80px;top:340.50px;background:radial-gradient(circle,#8768b2 0,#8768b2 2.2px,#a98ae2 3.4px);"></div>
<span class="t" style="left:1051.70px;top:359.32px;font-size:11.7px;color:#dadada;letter-spacing:-0.142px;">Centro</span>
<div class="port" style="left:1092.80px;top:360.60px;background:radial-gradient(circle,#8768b2 0,#8768b2 2.2px,#a98ae2 3.4px);"></div>
<span class="t" style="left:1005.30px;top:379.22px;font-size:11.7px;color:#dadada;letter-spacing:-0.081px;">Box Delimitante</span>
<div class="port" style="left:1092.80px;top:380.50px;background:radial-gradient(circle,#5fa2e0 0,#5fa2e0 2.2px,#62a4e2 3.4px);"></div>
<span class="t" style="left:980.20px;top:399.22px;font-size:11.7px;color:#dadada;letter-spacing:-0.128px;">Geometria</span>
<div class="port" style="left:965.00px;top:400.80px;background:radial-gradient(circle,#5fa2e0 0,#5fa2e0 2.2px,#62a4e2 3.4px);"></div>
<span class="t" style="left:1159.60px;top:283.56px;font-size:14.1px;color:#ececec;letter-spacing:0.054px;">Schiaccia e Stira</span>
<svg class="a" style="left:1137px;top:281px" width="18" height="20" viewBox="1137 281 18 20">
<path d="M1145.9 283.3L1152.4 286.7Q1148.9 290.9 1152.4 295.1L1145.9 298.8L1139.5 295.1Q1143 290.9 1139.5 286.7Z" fill="#2f376e" stroke="#a3abf2" stroke-width="1.1" stroke-linejoin="round"/>
<path d="M1142 288L1145.9 290.6L1149.9 288M1145.9 290.6V298" fill="none" stroke="#a3abf2" stroke-width="1"/></svg>
<div class="node" style="left:1134.6px;top:302.2px;width:128.6px;height:104.7px;border:1.8px solid #cc9040;border-radius:7.5px;"></div>
<div class="mi" style="left:1245.90px;top:309.20px;"><i style="top:0"></i><i style="top:4.3px"></i><i style="top:8.6px"></i></div>
<div class="bar" style="left:1142.8px;top:326.7px;width:112.2px;background:#6871d2;"></div>
<span class="t" style="left:1172.00px;top:339.22px;font-size:11.7px;color:#dadada;letter-spacing:-0.065px;">Trasformazione</span>
<div class="port" style="left:1258.50px;top:340.50px;background:radial-gradient(circle,#5fa2e0 0,#5fa2e0 2.2px,#62a4e2 3.4px);"></div>
<span class="t" style="left:1184.90px;top:359.12px;font-size:11.7px;color:#dadada;letter-spacing:0.027px;">Forza Effetto</span>
<div class="port" style="left:1258.50px;top:360.40px;background:radial-gradient(circle,#8a8a8a 0,#8a8a8a 2.2px,#d2d2d2 3.4px);"></div>
<span class="t" style="left:1145.70px;top:379.32px;font-size:11.7px;color:#dadada;letter-spacing:-0.024px;">Box Delimitante</span>
<div class="port" style="left:1130.20px;top:380.60px;background:radial-gradient(circle,#5fa2e0 0,#5fa2e0 2.2px,#62a4e2 3.4px);"></div>
<span class="t" style="left:1346.70px;top:118.06px;font-size:14.1px;color:#7c7c7c;letter-spacing:0.174px;">Op. Effettuatore</span>
<span class="t" style="left:1346.70px;top:136.16px;font-size:14.1px;color:#ececec;letter-spacing:0.151px;">Funzione Effettuatore</span>
<svg class="a" style="left:1324px;top:132px" width="18" height="20" viewBox="1324 132 18 20">
<path d="M1330.2 135.2Q1331.5 134.3 1332.9 135.1L1336 136.9Q1337 137.5 1337.4 138.6L1339.7 144.6Q1340.1 145.9 1339.2 146.8L1335.6 150Q1334.5 150.9 1333.5 149.9L1328.6 145.6Q1327.9 145 1327.7 144L1326.3 139.6Q1326 138.4 1327 137.6Z" fill="#2c3049" stroke="#8b95ca" stroke-width="1.1"/>
<path d="M1329.8 139.8L1333.4 143.4V146.2" fill="none" stroke="#7a7f98" stroke-width="1.2"/></svg>
<div class="node" style="left:1322.5px;top:155px;width:127.5px;height:142.5px;"></div>
<div class="mi" style="left:1433.20px;top:161.00px;"><i style="top:0"></i><i style="top:4.3px"></i><i style="top:8.6px"></i></div>
<div class="bar" style="left:1330px;top:178.8px;width:112px;background:#6871d2;"></div>
<span class="t" style="left:1374.60px;top:191.12px;font-size:11.7px;color:#dadada;letter-spacing:-0.015px;">Op. Output</span>
<svg class="a" style="left:1436.50px;top:194.20px" width="5" height="6" viewBox="0 0 5 6"><path d="M0.3 0.3v5.4L4.8 3z" fill="#e0e0e0"/></svg>
<div class="port" style="left:1445.30px;top:192.40px;background:radial-gradient(circle,#8e8e8e 0,#8e8e8e 2.2px,#949494 3.4px);"></div>
<span class="t" style="left:1339.60px;top:211.02px;font-size:11.7px;color:#dadada;letter-spacing:-0.054px;">Op. Input</span>
<div class="port" style="left:1317.30px;top:212.30px;background:radial-gradient(circle,#5fa2e0 0,#5fa2e0 2.2px,#62a4e2 3.4px);"></div>
<span class="t" style="left:1339.60px;top:230.92px;font-size:11.7px;color:#dadada;letter-spacing:-0.330px;">Campo</span>
<div class="port" style="left:1317.30px;top:232.20px;background:radial-gradient(circle,#4f7db0 0,#4f7db0 2.2px,#86b6e6 3.4px);"></div>
<svg class="a" style="left:1330.10px;top:254.90px" width="6" height="5" viewBox="0 0 6 5"><path d="M0.6 0.5h4.8L3 4.6z" fill="#e0e0e0"/></svg>
<span class="t" style="left:1339.60px;top:251.02px;font-size:11.7px;color:#dadada;letter-spacing:-0.115px;">Parametri</span>
<div class="port" style="left:1317.30px;top:252.30px;background:radial-gradient(circle,#6c6c6c 0,#6c6c6c 2.2px,#8a8a8a 3.4px);"></div>
<span class="t" style="left:1348.30px;top:271.02px;font-size:11.7px;color:#dadada;letter-spacing:-0.088px;">Trasformazione</span>
<div class="port" style="left:1317.30px;top:272.30px;background:radial-gradient(circle,#5fa2e0 0,#5fa2e0 2.2px,#62a4e2 3.4px);"></div>
<svg class="a" style="left:1325px;top:255px" width="30" height="30" viewBox="1325 255 30 30"><path d="M1333.1 261.4V273.9Q1333.1 276.9 1336 276.9H1340" fill="none" stroke="#535353" stroke-width="1"/><circle cx="1340.7" cy="276.9" r="1.4" fill="#5a5a5a"/></svg>
<div class="port" style="left:1509.60px;top:60.30px;background:radial-gradient(circle,#5fa2e0 0,#5fa2e0 2.2px,#62a4e2 3.4px);"></div>
<span class="t" style="left:1525.00px;top:59.32px;font-size:11.7px;color:#ececec;letter-spacing:-0.420px;">Scena</span>
</body></html>
